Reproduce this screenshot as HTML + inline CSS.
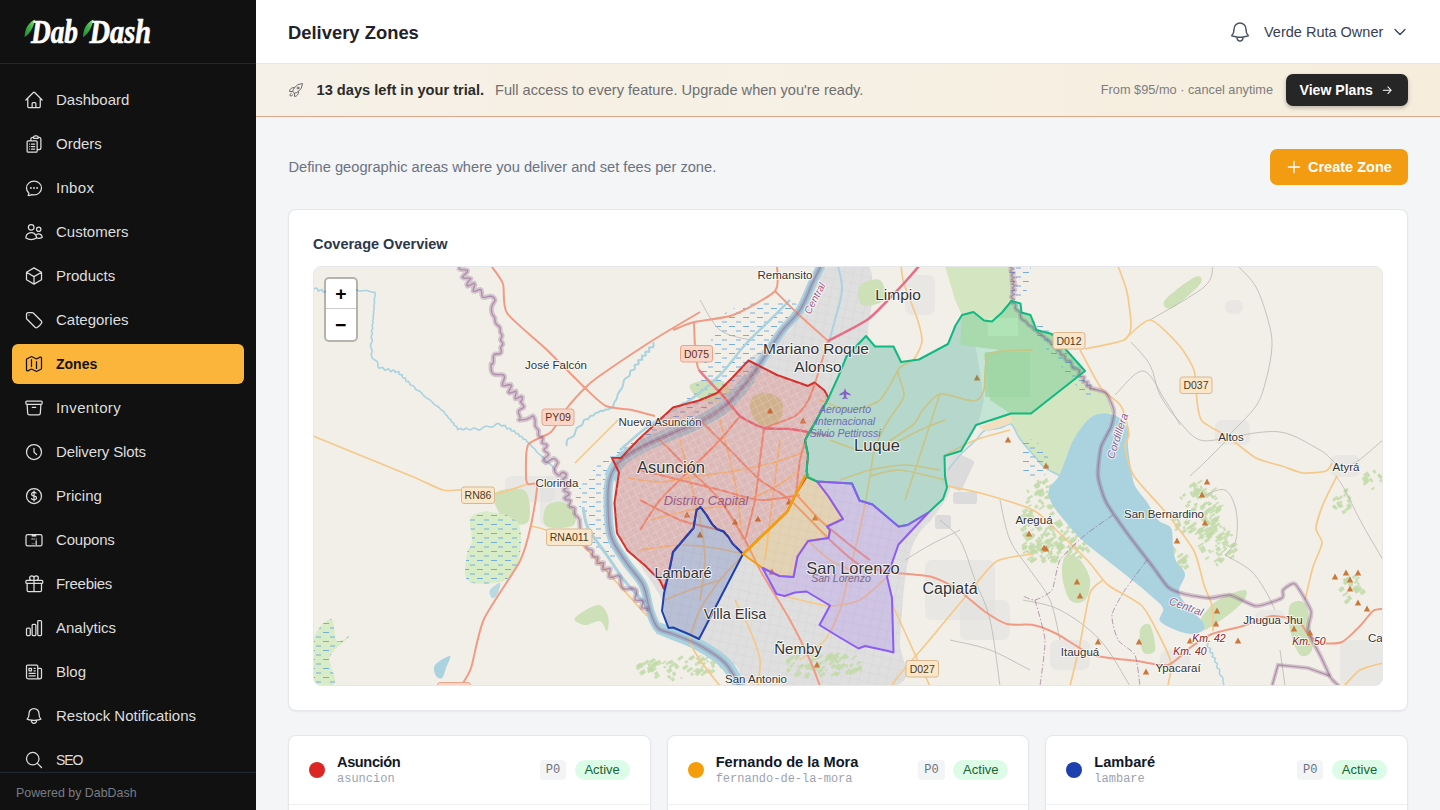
<!DOCTYPE html>
<html lang="en">
<head>
<meta charset="utf-8">
<title>Delivery Zones</title>
<style>
*{box-sizing:border-box;margin:0;padding:0}
html,body{width:1440px;height:810px;overflow:hidden}
body{font-family:"Liberation Sans",sans-serif;background:#f3f5f7;color:#1f2937;position:relative}
svg{display:block}
.ic{fill:none;stroke:currentColor;stroke-width:1.5;stroke-linecap:round;stroke-linejoin:round}
/* sidebar */
#side{position:absolute;left:0;top:0;width:256px;height:810px;background:#111111;color:#dcdcdc}
#logo{position:absolute;left:0;top:0;width:256px;height:64px;border-bottom:1px solid #1f2733}
#logo .t{position:absolute;left:31px;top:13px;font-family:"Liberation Serif",serif;font-style:italic;font-weight:bold;font-size:30px;line-height:36px;color:#fff;letter-spacing:-1px;white-space:nowrap}
#nav{position:absolute;left:12px;top:80px;width:232px}
#nav a{display:block;position:relative;height:40px;margin-bottom:4px;border-radius:6px;color:#dedede;text-decoration:none;font-size:15px;line-height:40px;padding-left:44px;white-space:nowrap}
#nav a svg{position:absolute;left:12px;top:10px;width:20px;height:20px}
#nav a.on{background:#fcb53b;color:#111;font-weight:bold;font-size:14px}
#foot{position:absolute;left:0;top:772px;width:256px;height:38px;border-top:1px solid #1f2733;color:#787c84;font-size:12.4px;line-height:40px;padding-left:16px}
/* header */
#head{position:absolute;left:256px;top:0;width:1184px;height:64px;background:#fff;border-bottom:1px solid #e5e7eb}
#head h1{position:absolute;left:32px;top:18.600px;font-size:18.4px;line-height:28px;font-weight:bold;color:#1f2328;white-space:nowrap}
#head .user{position:absolute;left:1008px;top:20px;font-size:14.5px;line-height:24px;color:#374151;white-space:nowrap}
#head .bell{position:absolute;left:972px;top:20px;width:24px;height:24px;color:#4b5563}
#head .chev{position:absolute;left:1136px;top:24px;width:16px;height:16px;color:#374151}
/* banner */
#ban{position:absolute;left:256px;top:64px;width:1184px;height:53px;background:linear-gradient(90deg,#f5f1e8 0%,#f7efe4 25%,#f6f0e3 60%,#f6eddc 100%);border-bottom:1px solid #e0a88a}
#ban .rk{position:absolute;left:32px;top:18px;width:16px;height:16px;color:#6b6b6b}
#ban .b1{position:absolute;left:60.5px;top:14px;font-size:14.65px;line-height:24px;font-weight:bold;color:#2b2b2b;white-space:nowrap}
#ban .b2{position:absolute;left:239px;top:14px;font-size:14.6px;line-height:24px;color:#6f6f6f;white-space:nowrap}
#ban .b3{position:absolute;right:167px;top:15px;font-size:12.75px;line-height:22px;color:#7d7d7d;white-space:nowrap}
#ban .btn{position:absolute;left:1030px;top:10px;width:122px;height:32px;border-radius:7px;background:#262626;color:#fff;font-weight:bold;font-size:14.1px;line-height:32px;padding-left:13.5px;box-shadow:0 2px 4px rgba(0,0,0,.25);white-space:nowrap}
#ban .btn svg{position:absolute;left:96px;top:11px;width:10.5px;height:10.5px;stroke-width:2.4}
/* main */
#desc{position:absolute;left:288.5px;top:155px;font-size:14.66px;line-height:24px;color:#6b7280;white-space:nowrap}
#create{position:absolute;left:1270px;top:149px;width:138px;height:36px;border-radius:7px;background:#f39c12;color:#fff;font-weight:bold;font-size:14.5px;line-height:36px;padding-left:38px;white-space:nowrap}
#create svg{position:absolute;left:15px;top:9px;width:18px;height:18px;stroke-width:1.8}
.card{position:absolute;background:#fff;border:1px solid #e5e7eb;border-radius:8px;box-shadow:0 1px 2px rgba(0,0,0,.06)}
#cov{left:288px;top:209px;width:1120px;height:502px}
#cov h2{position:absolute;left:24px;top:24px;font-size:14.5px;line-height:20px;font-weight:bold;color:#2d3748;white-space:nowrap}
#map{position:absolute;left:24px;top:56px;width:1070px;height:420px;border-radius:8px;overflow:hidden;border:1px solid #e5e7eb;background:#f2efe9}
.zc{top:735px;height:90px}
.zc .dot{position:absolute;left:20px;top:26px;width:16px;height:16px;border-radius:50%}
.zc .nm{position:absolute;left:48px;top:15px;font-size:14.6px;line-height:22px;font-weight:bold;color:#111827;white-space:nowrap}
.zc .sl{position:absolute;left:48px;top:35px;font-family:"Liberation Mono",monospace;font-size:12px;line-height:16px;color:#9ca3af;white-space:nowrap}
.zc .p0{position:absolute;right:83.5px;top:24px;width:26.5px;height:20px;border-radius:4px;background:#f3f4f6;color:#6b7280;font-family:"Liberation Mono",monospace;font-size:12px;line-height:20px;text-align:center}
.zc .ac{position:absolute;right:20px;top:24px;width:55px;height:20px;border-radius:10px;background:#dcfce7;color:#166534;font-size:13px;line-height:20px;text-align:center}
.zc .ln{position:absolute;left:0;right:0;top:68px;height:1px;background:#eef0f2}
</style>
</head>
<body>
<div id="side">
  <div id="logo"><svg width="256" height="64" viewBox="0 0 256 64" style="position:absolute;left:0;top:0">
<defs><linearGradient id="lf" x1="0" y1="1" x2="1" y2="0"><stop offset="0" stop-color="#1f8a33"/><stop offset=".55" stop-color="#3fb54a"/><stop offset="1" stop-color="#9be06a"/></linearGradient></defs>
<path d="M24.600 37.200C24.600 29.500 28 22.300 35 19.400C34 25.500 31 32.500 24.600 37.200Z" fill="url(#lf)"/>
<path d="M83 37.200C83 29.500 86.400 22.300 93.400 19.400C92.400 25.500 89.400 32.500 83 37.200Z" fill="url(#lf)"/>
<g font-family="'Liberation Serif',serif" font-weight="bold" font-style="italic" font-size="34" fill="#fff" stroke="#fff" stroke-width=".7" stroke-linejoin="round">
<text x="31" y="42.600" textLength="47" lengthAdjust="spacingAndGlyphs">Dab</text>
<text x="89.500" y="42.600" textLength="61.500" lengthAdjust="spacingAndGlyphs">Dash</text>
</g></svg></div>
  <div id="nav">
    <a><svg class="ic" viewBox="0 0 24 24"><path d="m2.25 12 8.954-8.955c.44-.439 1.152-.439 1.591 0L21.75 12M4.5 9.750v10.125c0 .621.504 1.125 1.125 1.125H9.750v-4.875c0-.621.504-1.125 1.125-1.125h2.250c.621 0 1.125.504 1.125 1.125V21h4.125c.621 0 1.125-.504 1.125-1.125V9.750M8.250 21h8.250"/></svg>Dashboard</a>
    <a><svg class="ic" viewBox="0 0 24 24"><path d="M9 12h3.750M9 15h3.750M9 18h3.750m3 .750H18a2.250 2.250 0 0 0 2.250-2.250V6.108c0-1.135-.845-2.098-1.976-2.192a48.424 48.424 0 0 0-1.123-.080m-5.801 0c-.065.210-.100.433-.100.664 0 .414.336.750.750.750h4.500a.750.750 0 0 0 .750-.750 2.250 2.250 0 0 0-.100-.664m-5.800 0A2.251 2.251 0 0 1 13.500 2.250H15c1.012 0 1.867.668 2.150 1.586m-5.800 0c-.376.023-.750.050-1.124.080C9.095 4.010 8.250 4.973 8.250 6.108V8.250m0 0H4.875c-.621 0-1.125.504-1.125 1.125v11.250c0 .621.504 1.125 1.125 1.125h9.750c.621 0 1.125-.504 1.125-1.125V9.375c0-.621-.504-1.125-1.125-1.125H8.250ZM6.750 12h.008v.008H6.750V12Zm0 3h.008v.008H6.750V15Zm0 3h.008v.008H6.750V18Z"/></svg>Orders</a>
    <a><svg class="ic" viewBox="0 0 24 24"><path d="M8.625 12a.375.375 0 1 1-.750 0 .375.375 0 0 1 .750 0Zm0 0H8.250m4.125 0a.375.375 0 1 1-.750 0 .375.375 0 0 1 .750 0Zm0 0H12m4.125 0a.375.375 0 1 1-.750 0 .375.375 0 0 1 .750 0Zm0 0h-.375M21 12c0 4.556-4.030 8.250-9 8.250a9.764 9.764 0 0 1-2.555-.337A5.972 5.972 0 0 1 5.410 20.970a5.969 5.969 0 0 1-.474-.065 4.480 4.480 0 0 0 .978-2.025c.090-.457-.133-.901-.467-1.226C3.930 16.178 3 14.189 3 12c0-4.556 4.030-8.250 9-8.250s9 3.694 9 8.250Z"/></svg><span style="letter-spacing:0.3px">Inbox</span></a>
    <a><svg class="ic" viewBox="0 0 24 24"><path d="M15 19.128a9.380 9.380 0 0 0 2.625.372 9.337 9.337 0 0 0 4.121-.952 4.125 4.125 0 0 0-7.533-2.493M15 19.128v-.003c0-1.113-.285-2.160-.786-3.070M15 19.128v.106A12.318 12.318 0 0 1 8.624 21c-2.331 0-4.512-.645-6.374-1.766l-.001-.109a6.375 6.375 0 0 1 11.964-3.070M12 6.375a3.375 3.375 0 1 1-6.750 0 3.375 3.375 0 0 1 6.750 0Zm8.250 2.250a2.625 2.625 0 1 1-5.250 0 2.625 2.625 0 0 1 5.250 0Z"/></svg>Customers</a>
    <a><svg class="ic" viewBox="0 0 24 24"><path d="m21 7.500-9-5.250L3 7.500m18 0-9 5.250m9-5.250v9l-9 5.250M3 7.500l9 5.250M3 7.500v9l9 5.250m0-9v9"/></svg>Products</a>
    <a><svg class="ic" viewBox="0 0 24 24"><path d="M9.568 3H5.250A2.250 2.250 0 0 0 3 5.250v4.318c0 .597.237 1.170.659 1.591l9.581 9.581c.699.699 1.780.872 2.607.330a18.095 18.095 0 0 0 5.223-5.223c.542-.827.369-1.908-.330-2.607L11.160 3.660A2.250 2.250 0 0 0 9.568 3Z"/><path d="M6 6h.008v.008H6V6Z"/></svg>Categories</a>
    <a class="on"><svg class="ic" viewBox="0 0 24 24"><path d="M9 6.750V15m6-6v8.250m.503 3.498 4.875-2.437c.381-.190.622-.580.622-1.006V4.820c0-.836-.880-1.380-1.628-1.006l-3.869 1.934c-.317.159-.690.159-1.006 0L9.503 3.252a1.125 1.125 0 0 0-1.006 0L3.622 5.689C3.240 5.880 3 6.270 3 6.695V19.180c0 .836.880 1.380 1.628 1.006l3.869-1.934c.317-.159.690-.159 1.006 0l4.994 2.497c.317.158.690.158 1.006 0Z"/></svg>Zones</a>
    <a><svg class="ic" viewBox="0 0 24 24"><path d="m20.250 7.500-.625 10.632a2.250 2.250 0 0 1-2.247 2.118H6.622a2.250 2.250 0 0 1-2.247-2.118L3.750 7.500M10 11.250h4M3.375 7.500h17.250c.621 0 1.125-.504 1.125-1.125v-1.500c0-.621-.504-1.125-1.125-1.125H3.375c-.621 0-1.125.504-1.125 1.125v1.500c0 .621.504 1.125 1.125 1.125Z"/></svg><span style="letter-spacing:0.38px">Inventory</span></a>
    <a><svg class="ic" viewBox="0 0 24 24"><path d="M12 7.500v4.700l3 2.800M21 12a9 9 0 1 1-18 0 9 9 0 0 1 18 0Z"/></svg><span style="letter-spacing:-0.13px">Delivery Slots</span></a>
    <a><svg class="ic" viewBox="0 0 24 24"><path d="M12 6v12m-3-2.818.879.659c1.171.879 3.070.879 4.242 0 1.172-.879 1.172-2.303 0-3.182C13.536 12.219 12.768 12 12 12c-.725 0-1.450-.220-2.003-.659-1.106-.879-1.106-2.303 0-3.182s2.900-.879 4.006 0l.415.330M21 12a9 9 0 1 1-18 0 9 9 0 0 1 18 0Z"/></svg>Pricing</a>
    <a><svg class="ic" viewBox="0 0 24 24"><rect x="2.400" y="5.400" width="19.200" height="13.600" rx="2"/><path d="M9.200 6.600h5.600" stroke-width="2.600" stroke-linecap="butt"/><path d="M9.400 10.800h.800M11.700 10.800h.800M14.500 10.800h.400" stroke-width="1.200"/><path d="M14.600 13v4.500"/><path d="M9.600 16.500h3" stroke-width="1" opacity=".5"/></svg><span style="letter-spacing:-0.2px">Coupons</span></a>
    <a><svg class="ic" viewBox="0 0 24 24"><path d="M21 11.250v8.250a1.500 1.500 0 0 1-1.500 1.500H5.250a1.500 1.500 0 0 1-1.500-1.500v-8.250M12 4.875A2.625 2.625 0 1 0 9.375 7.500H12m0-2.625V7.500m0-2.625A2.625 2.625 0 1 1 14.625 7.500H12m0 0V21m-8.625-9.750h18c.621 0 1.125-.504 1.125-1.125v-1.500c0-.621-.504-1.125-1.125-1.125h-18c-.621 0-1.125.504-1.125 1.125v1.500c0 .621.504 1.125 1.125 1.125Z"/></svg><span style="letter-spacing:-0.3px">Freebies</span></a>
    <a><svg class="ic" viewBox="0 0 24 24"><path d="M3 13.125C3 12.504 3.504 12 4.125 12h2.250c.621 0 1.125.504 1.125 1.125v6.750C7.500 20.496 6.996 21 6.375 21h-2.250A1.125 1.125 0 0 1 3 19.875v-6.750ZM9.750 8.625c0-.621.504-1.125 1.125-1.125h2.250c.621 0 1.125.504 1.125 1.125v11.250c0 .621-.504 1.125-1.125 1.125h-2.250a1.125 1.125 0 0 1-1.125-1.125V8.625ZM16.500 4.125c0-.621.504-1.125 1.125-1.125h2.250C20.496 3 21 3.504 21 4.125v15.750c0 .621-.504 1.125-1.125 1.125h-2.250a1.125 1.125 0 0 1-1.125-1.125V4.125Z"/></svg>Analytics</a>
    <a><svg class="ic" viewBox="0 0 24 24"><path d="M12 7.500h1.500m-1.500 3h1.500m-7.500 3h7.500m-7.500 3h7.500m3-9h3.375c.621 0 1.125.504 1.125 1.125V18a2.250 2.250 0 0 1-2.250 2.250M16.500 7.500V18a2.250 2.250 0 0 0 2.250 2.250M16.500 7.500V4.875c0-.621-.504-1.125-1.125-1.125H4.125C3.504 3.750 3 4.254 3 4.875V18a2.250 2.250 0 0 0 2.250 2.250h13.500M6 7.500h3v3H6v-3Z"/></svg>Blog</a>
    <a><svg class="ic" viewBox="0 0 24 24"><path d="M14.857 17.082a23.848 23.848 0 0 0 5.454-1.310A8.967 8.967 0 0 1 18 9.750V9A6 6 0 0 0 6 9v.750a8.967 8.967 0 0 1-2.312 6.022c1.733.640 3.560 1.085 5.455 1.310m5.714 0a24.255 24.255 0 0 1-5.714 0m5.714 0a3 3 0 1 1-5.714 0"/></svg>Restock Notifications</a>
    <a><svg class="ic" viewBox="0 0 24 24"><path d="m21 21-5.197-5.197m0 0A7.500 7.500 0 1 0 5.196 5.196a7.500 7.500 0 0 0 10.607 10.607Z"/></svg><span style="letter-spacing:-1.1px;font-size:14px">SEO</span></a>
  </div>
  <div id="foot">Powered by DabDash</div>
</div>

<div id="head">
  <h1>Delivery Zones</h1>
  <svg class="ic bell" viewBox="0 0 24 24"><path d="M14.857 17.082a23.848 23.848 0 0 0 5.454-1.310A8.967 8.967 0 0 1 18 9.750V9A6 6 0 0 0 6 9v.750a8.967 8.967 0 0 1-2.312 6.022c1.733.640 3.560 1.085 5.455 1.310m5.714 0a24.255 24.255 0 0 1-5.714 0m5.714 0a3 3 0 1 1-5.714 0"/></svg>
  <div class="user">Verde Ruta Owner</div>
  <svg class="ic chev" viewBox="0 0 24 24" style="stroke-width:2"><path d="m19.500 8.250-7.500 7.500-7.500-7.500"/></svg>
</div>

<div id="ban">
  <svg class="ic rk" viewBox="0 0 24 24"><path d="M15.590 14.370a6 6 0 0 1-5.840 7.380v-4.800m5.840-2.580a14.980 14.980 0 0 0 6.160-12.120A14.980 14.980 0 0 0 9.631 8.410m5.960 5.960a14.926 14.926 0 0 1-5.841 2.580m-.119-8.540a6 6 0 0 0-7.381 5.840h4.800m2.581-5.840a14.927 14.927 0 0 0-2.580 5.840m2.699 2.700c-.103.021-.207.041-.311.060a15.090 15.090 0 0 1-2.448-2.448 14.900 14.900 0 0 1 .060-.312m-2.240 2.390a4.493 4.493 0 0 0-1.757 4.306 4.493 4.493 0 0 0 4.306-1.758M16.500 9a1.500 1.500 0 1 1-3 0 1.500 1.500 0 0 1 3 0Z"/></svg>
  <div class="b1">13 days left in your trial.</div>
  <div class="b2">Full access to every feature. Upgrade when you're ready.</div>
  <div class="b3">From $95/mo · cancel anytime</div>
  <div class="btn">View Plans<svg class="ic" viewBox="0 0 24 24"><path d="M13.500 4.500 21 12m0 0-7.500 7.500M21 12H3"/></svg></div>
</div>

<div id="desc">Define geographic areas where you deliver and set fees per zone.</div>
<div id="create"><svg class="ic" viewBox="0 0 24 24"><path d="M12 4.500v15m7.500-7.500h-15"/></svg>Create Zone</div>

<div class="card" id="cov">
  <h2>Coverage Overview</h2>
  <div id="map">
<svg width="1070" height="420" viewBox="313 266 1070 420" style="position:absolute;left:-1px;top:-1px" font-family="'Liberation Sans',sans-serif">
<defs>
<pattern id="wet" width="14" height="9" patternUnits="userSpaceOnUse"><path d="M1 2.5h6M8 7h5" stroke="#6aa5dc" stroke-width=".9" fill="none"/></pattern>
<pattern id="grid" width="7" height="7" patternUnits="userSpaceOnUse" patternTransform="rotate(-28)"><path d="M0 .5h7M.5 0v7" stroke="#fff" stroke-opacity=".5" stroke-width=".6" fill="none"/></pattern>
<pattern id="grid2" width="9" height="9" patternUnits="userSpaceOnUse" patternTransform="rotate(12)"><path d="M0 .5h9M.5 0v9" stroke="#c9c7c4" stroke-opacity=".45" stroke-width=".5" fill="none"/></pattern>
</defs>
<rect x="313" y="266" width="1070" height="420" fill="#f2efe9"/>
<path d="M640 440C648.7 431.7 661.2 417 672 410C682.8 403 695.3 403 705 398C714.7 393 722.8 386.3 730 380C737.2 373.7 738 368.3 748 360C758 351.7 781.3 340 790 330C798.7 320 795.8 309.2 800 300C804.2 290.8 809.2 280.7 815 275C820.8 269.3 826.2 267.5 835 266C843.8 264.5 861.8 260.3 868 266C874.2 271.7 872 288.3 872 300C872 311.7 866.7 327.7 868 336C869.3 344.3 873.8 345.2 880 350C886.2 354.8 895.8 359.2 905 365C914.2 370.8 926.7 375.8 935 385C943.3 394.2 951.2 408.3 955 420C958.8 431.7 958.8 443.3 958 455C957.2 466.7 953.8 480 950 490C946.2 500 940.8 506.7 935 515C929.2 523.3 920 529.2 915 540C910 550.8 907.5 563.3 905 580C902.5 596.7 901.7 622.3 900 640C898.3 657.7 918.3 678.3 895 686C871.7 693.7 786.7 689.5 760 686C733.3 682.5 745 671.8 735 665C725 658.2 711.2 651.2 700 645C688.8 638.8 674.3 635.5 668 628C661.7 620.5 666.7 610.5 662 600C657.3 589.5 647.3 575.8 640 565C632.7 554.2 622.3 545.8 618 535C613.7 524.2 613.7 512.5 614 500C614.3 487.5 615.7 470 620 460C624.3 450 631.3 448.3 640 440Z" fill="#e0dfdf"/>
<path d="M640 440C648.7 431.7 661.2 417 672 410C682.8 403 695.3 403 705 398C714.7 393 722.8 386.3 730 380C737.2 373.7 738 368.3 748 360C758 351.7 781.3 340 790 330C798.7 320 795.8 309.2 800 300C804.2 290.8 809.2 280.7 815 275C820.8 269.3 826.2 267.5 835 266C843.8 264.5 861.8 260.3 868 266C874.2 271.7 872 288.3 872 300C872 311.7 866.7 327.7 868 336C869.3 344.3 873.8 345.2 880 350C886.2 354.8 895.8 359.2 905 365C914.2 370.8 926.7 375.8 935 385C943.3 394.2 951.2 408.3 955 420C958.8 431.7 958.8 443.3 958 455C957.2 466.7 953.8 480 950 490C946.2 500 940.8 506.7 935 515C929.2 523.3 920 529.2 915 540C910 550.8 907.5 563.3 905 580C902.5 596.7 901.7 622.3 900 640C898.3 657.7 918.3 678.3 895 686C871.7 693.7 786.7 689.5 760 686C733.3 682.5 745 671.8 735 665C725 658.2 711.2 651.2 700 645C688.8 638.8 674.3 635.5 668 628C661.7 620.5 666.7 610.5 662 600C657.3 589.5 647.3 575.8 640 565C632.7 554.2 622.3 545.8 618 535C613.7 524.2 613.7 512.5 614 500C614.3 487.5 615.7 470 620 460C624.3 450 631.3 448.3 640 440Z" fill="url(#grid2)"/>
<rect x="925" y="560" width="70" height="60" rx="7" fill="#e0dfdf" opacity=".5"/>
<rect x="960" y="600" width="50" height="40" rx="7" fill="#e0dfdf" opacity=".5"/>
<rect x="1050" y="640" width="40" height="30" rx="7" fill="#e0dfdf" opacity=".5"/>
<rect x="1160" y="650" width="30" height="22" rx="7" fill="#e0dfdf" opacity=".5"/>
<rect x="1215" y="420" width="35" height="25" rx="7" fill="#e0dfdf" opacity=".5"/>
<rect x="1330" y="455" width="30" height="22" rx="7" fill="#e0dfdf" opacity=".5"/>
<rect x="1340" y="640" width="43" height="46" rx="7" fill="#e0dfdf" opacity=".5"/>
<rect x="1255" y="610" width="30" height="14" rx="7" fill="#e0dfdf" opacity=".5"/>
<rect x="1085" y="498" width="24" height="14" rx="7" fill="#e0dfdf" opacity=".5"/>
<rect x="505" y="476" width="50" height="26" rx="7" fill="#e0dfdf" opacity=".5"/>
<rect x="540" y="476" width="30" height="50" rx="7" fill="#e0dfdf" opacity=".5"/>
<rect x="1225" y="300" width="18" height="14" rx="7" fill="#e0dfdf" opacity=".5"/>
<rect x="905" y="275" width="30" height="40" rx="7" fill="#e0dfdf" opacity=".5"/>
<path d="M945 266 L1011 266 L1014 285 L1012 300 L1023 320 L1049 341 L1077 370 L1090 388 L1106 393 L1113 413 L1093 416 L1075 437 L1066 458 L1060 476 L1044 467 L1024 444 L1011 424 L990 421 L976 425 L1011 414 L1031 413 L1085 371 L1052 334 L1036 330 L1030 315 L1021 312 L1011 301 L1002 313 L992 322 L984 320 L974 312 L962 315 L955 300Z" fill="#d4e5c1"/>
<path d="M806 471 L808 455 L805 440 L817 419 L828.5 398 L839 375 L846.5 356.5 L866 336 L875 346.5 L893.5 346.5 L901 362 L919 359.5 L948 344 L955.5 325.5 L962 315 L972 330 L978 360 L984 400 L978 425 L961 451 L944.5 456 L945 476 L947 487.5 L943 499 L928.5 512.5 L907.5 525 L898.5 526.5 L872.5 504.5 L859.5 500.5 L852 483.5 L817 481.5Z" fill="#e0dfdf"/>
<rect x="955" y="452" width="22" height="34" rx="3" fill="#dcdbdb" transform="rotate(25 955 452)"/>
<rect x="953" y="492" width="24" height="12" rx="3" fill="#dcdbdb" transform="rotate(0 953 492)"/>
<rect x="935" y="515" width="16" height="14" rx="3" fill="#dcdbdb" transform="rotate(0 935 515)"/>
<path d="M948 470C949.6 468 956.3 459 960 455C963.7 451 972.8 443.2 976 440C979.2 436.8 980.8 432.6 984 431C987.2 429.4 996.4 428.9 1000 428C1003.6 427.1 1008.6 422.9 1011 424C1013.4 425.1 1016.3 433.3 1018 436C1019.7 438.7 1021.6 441.1 1024 444C1026.4 446.9 1033.3 454.9 1036 458C1038.7 461.1 1040.8 464.6 1044 467C1047.2 469.4 1057.9 474.8 1060 476" fill="none" stroke="#aad3df" stroke-width="1.6"/>
<path d="M962 315 L974 312 L984 320 L992 322 L1002 313 L1011 301 L1021 312 L1030 315 L1036 330 L1052 334 L1085 371 L1031 413 L1011 414 L990 400 L984 354 L1000 350 L960 345Z" fill="#cfe3b8"/>
<rect x="985" y="352" width="45" height="45" fill="#c3dcae" opacity=".8"/>
<rect x="988" y="318" width="30" height="18" fill="#d9efc4"/>
<path d="M978 427 L1011 415 L1012 423 L1000 427 L986 431Z" fill="#f1dfc0"/>
<path d="M494 494C497.3 489.2 519.3 486.3 525 491C530.7 495.7 531.3 517.2 528 522C524.7 526.8 510.7 524.7 505 520C499.3 515.3 490.7 498.8 494 494Z" fill="#cde0b8"/>
<path d="M546 507C548.7 503 557.2 501.2 562 502C566.8 502.8 573.3 508 575 512C576.7 516 576.8 523.7 572 526C567.2 528.3 550.3 529.2 546 526C541.7 522.8 543.3 511 546 507Z" fill="#cde0b8"/>
<path d="M575 618C577.2 614.7 592.5 605.3 598 605C603.5 604.7 606.5 611.7 608 616C609.5 620.3 608.3 630.2 607 631C605.7 631.8 603.7 622 600 621C596.3 620 589.2 625.5 585 625C580.8 624.5 572.8 621.3 575 618Z" fill="#cde0b8"/>
<path d="M1165 300C1168.8 294.8 1189.2 279.7 1195 277C1200.8 274.3 1203.8 278.8 1200 284C1196.2 289.2 1177.8 305.3 1172 308C1166.2 310.7 1161.2 305.2 1165 300Z" fill="#cde0b8"/>
<path d="M860 286C863 281.8 876 277.7 880 280C884 282.3 887 295.8 884 300C881 304.2 866 307.3 862 305C858 302.7 857 290.2 860 286Z" fill="#cde0b8"/>
<path d="M1066 555C1069 552.5 1076 555.8 1080 560C1084 564.2 1089.2 573.3 1090 580C1090.8 586.7 1088.3 596.7 1085 600C1081.7 603.3 1073.8 604.2 1070 600C1066.2 595.8 1062.7 582.5 1062 575C1061.3 567.5 1063 557.5 1066 555Z" fill="#cde0b8"/>
<path d="M1290 605C1292.5 600.5 1301.7 599.7 1305 603C1308.3 606.3 1308.8 617.2 1310 625C1311.2 632.8 1313.7 645 1312 650C1310.3 655 1303.7 658.3 1300 655C1296.3 651.7 1291.7 638.3 1290 630C1288.3 621.7 1287.5 609.5 1290 605Z" fill="#cde0b8"/>
<path d="M1218 600C1225.5 595 1241.3 589.2 1245 590C1248.7 590.8 1246.7 598.3 1240 605C1233.3 611.7 1211.7 627.5 1205 630C1198.3 632.5 1197.8 625 1200 620C1202.2 615 1210.5 605 1218 600Z" fill="#cde0b8"/>
<path d="M1140 630C1141.2 625.5 1147.5 621.7 1150 625C1152.5 628.3 1156.2 645.5 1155 650C1153.8 654.5 1145.5 655.3 1143 652C1140.5 648.7 1138.8 634.5 1140 630Z" fill="#cde0b8"/>
<path d="M690 385C692.5 381.3 713.3 378.3 720 380C726.7 381.7 732.5 391.3 730 395C727.5 398.7 711.7 403.7 705 402C698.3 400.3 687.5 388.7 690 385Z" fill="#cde0b8"/>
<path d="M752 398C754.7 394.2 763 392.3 768 393C773 393.7 780 397.5 782 402C784 406.5 783 416 780 420C777 424 768.7 426.7 764 426C759.3 425.3 754 420.7 752 416C750 411.3 749.3 401.8 752 398Z" fill="#cfd3a8"/>
<rect x="1036.2" y="543.9" width="5.3" height="1.7" fill="#c2dba9" opacity=".85" transform="rotate(-35 1036.2 543.9)"/>
<rect x="1027" y="524.6" width="2.3" height="3" fill="#c2dba9" opacity=".85" transform="rotate(-35 1027 524.6)"/>
<rect x="1054.1" y="536.1" width="2.3" height="1.8" fill="#c2dba9" opacity=".85" transform="rotate(-35 1054.1 536.1)"/>
<rect x="1022.2" y="546.6" width="2.6" height="2.2" fill="#c2dba9" opacity=".85" transform="rotate(-35 1022.2 546.6)"/>
<rect x="1025.1" y="502" width="4.9" height="2.7" fill="#c2dba9" opacity=".85" transform="rotate(-35 1025.1 502)"/>
<rect x="1044.7" y="528.7" width="6.3" height="2.4" fill="#c2dba9" opacity=".85" transform="rotate(-35 1044.7 528.7)"/>
<rect x="1044.7" y="540.8" width="3.5" height="3.9" fill="#c2dba9" opacity=".85" transform="rotate(-35 1044.7 540.8)"/>
<rect x="1047.1" y="557.7" width="5.2" height="2.6" fill="#c2dba9" opacity=".85" transform="rotate(-35 1047.1 557.7)"/>
<rect x="1034.7" y="527" width="2.3" height="2.1" fill="#c2dba9" opacity=".85" transform="rotate(-35 1034.7 527)"/>
<rect x="1033.9" y="506.3" width="3.6" height="3.3" fill="#c2dba9" opacity=".85" transform="rotate(-35 1033.9 506.3)"/>
<rect x="1028.5" y="536.3" width="6" height="3.6" fill="#c2dba9" opacity=".85" transform="rotate(-35 1028.5 536.3)"/>
<rect x="1040.6" y="560.3" width="4.6" height="4.1" fill="#c2dba9" opacity=".85" transform="rotate(-35 1040.6 560.3)"/>
<rect x="1038.5" y="508.7" width="6.9" height="1.9" fill="#c2dba9" opacity=".85" transform="rotate(-35 1038.5 508.7)"/>
<rect x="1023.3" y="547.1" width="2.8" height="3" fill="#c2dba9" opacity=".85" transform="rotate(-35 1023.3 547.1)"/>
<rect x="1057.4" y="538" width="5.8" height="3.2" fill="#c2dba9" opacity=".85" transform="rotate(-35 1057.4 538)"/>
<rect x="1048.7" y="514.2" width="5.5" height="3.3" fill="#c2dba9" opacity=".85" transform="rotate(-35 1048.7 514.2)"/>
<rect x="1027" y="517" width="6.2" height="4.3" fill="#c2dba9" opacity=".85" transform="rotate(-35 1027 517)"/>
<rect x="1022.3" y="535.3" width="2.3" height="3.6" fill="#c2dba9" opacity=".85" transform="rotate(-35 1022.3 535.3)"/>
<rect x="1026.8" y="498.2" width="6.1" height="2.4" fill="#c2dba9" opacity=".85" transform="rotate(-35 1026.8 498.2)"/>
<rect x="1026.4" y="551.5" width="2.1" height="2.9" fill="#c2dba9" opacity=".85" transform="rotate(-35 1026.4 551.5)"/>
<rect x="1043.7" y="541.9" width="2.3" height="3.8" fill="#c2dba9" opacity=".85" transform="rotate(-35 1043.7 541.9)"/>
<rect x="1047.5" y="544.5" width="4" height="4.1" fill="#c2dba9" opacity=".85" transform="rotate(-35 1047.5 544.5)"/>
<rect x="1052.9" y="543" width="4.7" height="4.2" fill="#c2dba9" opacity=".85" transform="rotate(-35 1052.9 543)"/>
<rect x="1048.6" y="496.3" width="3.4" height="2.7" fill="#c2dba9" opacity=".85" transform="rotate(-35 1048.6 496.3)"/>
<rect x="1026.9" y="559.2" width="6.8" height="2" fill="#c2dba9" opacity=".85" transform="rotate(-35 1026.9 559.2)"/>
<rect x="1044.7" y="547.2" width="3.2" height="3" fill="#c2dba9" opacity=".85" transform="rotate(-35 1044.7 547.2)"/>
<rect x="1030.4" y="519.1" width="2" height="2.8" fill="#c2dba9" opacity=".85" transform="rotate(-35 1030.4 519.1)"/>
<rect x="1028.7" y="552" width="6.8" height="3.6" fill="#c2dba9" opacity=".85" transform="rotate(-35 1028.7 552)"/>
<rect x="1022.8" y="526.9" width="5.4" height="1.7" fill="#c2dba9" opacity=".85" transform="rotate(-35 1022.8 526.9)"/>
<rect x="1055.7" y="509.2" width="6.4" height="3.9" fill="#c2dba9" opacity=".85" transform="rotate(-35 1055.7 509.2)"/>
<rect x="1029.2" y="545.8" width="2.5" height="3.4" fill="#c2dba9" opacity=".85" transform="rotate(-35 1029.2 545.8)"/>
<rect x="1045.3" y="534" width="3" height="2" fill="#c2dba9" opacity=".85" transform="rotate(-35 1045.3 534)"/>
<rect x="1037.3" y="537.7" width="2" height="2" fill="#c2dba9" opacity=".85" transform="rotate(-35 1037.3 537.7)"/>
<rect x="1050.7" y="544.4" width="2.1" height="4.1" fill="#c2dba9" opacity=".85" transform="rotate(-35 1050.7 544.4)"/>
<rect x="1033.6" y="519.9" width="3.3" height="2.5" fill="#c2dba9" opacity=".85" transform="rotate(-35 1033.6 519.9)"/>
<rect x="1034.9" y="540.6" width="6.2" height="4.5" fill="#c2dba9" opacity=".85" transform="rotate(-35 1034.9 540.6)"/>
<rect x="1025" y="535.9" width="2.4" height="1.8" fill="#c2dba9" opacity=".85" transform="rotate(-35 1025 535.9)"/>
<rect x="1033.8" y="547.2" width="6.1" height="2" fill="#c2dba9" opacity=".85" transform="rotate(-35 1033.8 547.2)"/>
<rect x="1061.2" y="535.6" width="4.6" height="1.9" fill="#c2dba9" opacity=".85" transform="rotate(-35 1061.2 535.6)"/>
<rect x="1036.5" y="528.2" width="4.6" height="4.4" fill="#c2dba9" opacity=".85" transform="rotate(-35 1036.5 528.2)"/>
<rect x="1052" y="504.7" width="3.3" height="2.6" fill="#c2dba9" opacity=".85" transform="rotate(-35 1052 504.7)"/>
<rect x="1049.6" y="560.5" width="4.7" height="3.8" fill="#c2dba9" opacity=".85" transform="rotate(-35 1049.6 560.5)"/>
<rect x="1035" y="546.6" width="6.1" height="4.5" fill="#c2dba9" opacity=".85" transform="rotate(-35 1035 546.6)"/>
<rect x="1051.9" y="501.3" width="6.1" height="3.7" fill="#c2dba9" opacity=".85" transform="rotate(-35 1051.9 501.3)"/>
<rect x="1042.3" y="558.5" width="3.8" height="1.6" fill="#c2dba9" opacity=".85" transform="rotate(-35 1042.3 558.5)"/>
<rect x="1051.5" y="533.7" width="3.3" height="3.6" fill="#c2dba9" opacity=".85" transform="rotate(-35 1051.5 533.7)"/>
<rect x="1054.2" y="522.8" width="6.7" height="4.5" fill="#c2dba9" opacity=".85" transform="rotate(-35 1054.2 522.8)"/>
<rect x="1052.8" y="523.3" width="3.1" height="2.2" fill="#c2dba9" opacity=".85" transform="rotate(-35 1052.8 523.3)"/>
<rect x="1043.3" y="547.1" width="5.1" height="4.2" fill="#c2dba9" opacity=".85" transform="rotate(-35 1043.3 547.1)"/>
<rect x="1048.2" y="506.7" width="5.3" height="3.9" fill="#c2dba9" opacity=".85" transform="rotate(-35 1048.2 506.7)"/>
<rect x="1055.4" y="546.5" width="6.5" height="3.8" fill="#c2dba9" opacity=".85" transform="rotate(-35 1055.4 546.5)"/>
<rect x="1040" y="502.3" width="2.9" height="3.9" fill="#c2dba9" opacity=".85" transform="rotate(-35 1040 502.3)"/>
<rect x="1030.2" y="561.1" width="6.9" height="2.7" fill="#c2dba9" opacity=".85" transform="rotate(-35 1030.2 561.1)"/>
<rect x="1022.6" y="552.6" width="5.6" height="2" fill="#c2dba9" opacity=".85" transform="rotate(-35 1022.6 552.6)"/>
<rect x="1046" y="541.1" width="6.5" height="3.9" fill="#c2dba9" opacity=".85" transform="rotate(-35 1046 541.1)"/>
<rect x="1052.1" y="558.9" width="6.9" height="3.5" fill="#c2dba9" opacity=".85" transform="rotate(-35 1052.1 558.9)"/>
<rect x="1030.4" y="553.9" width="2.7" height="1.5" fill="#c2dba9" opacity=".85" transform="rotate(-35 1030.4 553.9)"/>
<rect x="1057.4" y="524.1" width="4.6" height="4.3" fill="#c2dba9" opacity=".85" transform="rotate(-35 1057.4 524.1)"/>
<rect x="1021.2" y="545.1" width="6.1" height="2.1" fill="#c2dba9" opacity=".85" transform="rotate(-35 1021.2 545.1)"/>
<rect x="1039.9" y="551.6" width="3.2" height="3.3" fill="#c2dba9" opacity=".85" transform="rotate(-35 1039.9 551.6)"/>
<rect x="1039.2" y="555.8" width="2.7" height="4.2" fill="#c2dba9" opacity=".85" transform="rotate(-35 1039.2 555.8)"/>
<rect x="1031" y="551.5" width="4.9" height="4.2" fill="#c2dba9" opacity=".85" transform="rotate(-35 1031 551.5)"/>
<rect x="1021.5" y="548.3" width="4.5" height="3.1" fill="#c2dba9" opacity=".85" transform="rotate(-35 1021.5 548.3)"/>
<rect x="1037" y="529.2" width="4.2" height="2" fill="#c2dba9" opacity=".85" transform="rotate(-35 1037 529.2)"/>
<rect x="1059.7" y="530.9" width="2.9" height="2.9" fill="#c2dba9" opacity=".85" transform="rotate(-35 1059.7 530.9)"/>
<rect x="1037.5" y="500.5" width="3.6" height="3.1" fill="#c2dba9" opacity=".85" transform="rotate(-35 1037.5 500.5)"/>
<rect x="1021.7" y="517.9" width="2.5" height="3.2" fill="#c2dba9" opacity=".85" transform="rotate(-35 1021.7 517.9)"/>
<rect x="1040.1" y="551" width="5.9" height="3" fill="#c2dba9" opacity=".85" transform="rotate(-35 1040.1 551)"/>
<rect x="1022.2" y="516.8" width="6.6" height="2.8" fill="#c2dba9" opacity=".85" transform="rotate(-35 1022.2 516.8)"/>
<rect x="1028.1" y="511.5" width="4.6" height="3.6" fill="#c2dba9" opacity=".85" transform="rotate(-35 1028.1 511.5)"/>
<rect x="1024.6" y="538.6" width="4.4" height="4.3" fill="#c2dba9" opacity=".85" transform="rotate(-35 1024.6 538.6)"/>
<rect x="1033.5" y="494.4" width="6.7" height="2.3" fill="#c2dba9" opacity=".85" transform="rotate(-35 1033.5 494.4)"/>
<rect x="1020.1" y="515.8" width="6.2" height="1.9" fill="#c2dba9" opacity=".85" transform="rotate(-35 1020.1 515.8)"/>
<rect x="1050.6" y="548.4" width="2.4" height="2.2" fill="#c2dba9" opacity=".85" transform="rotate(-35 1050.6 548.4)"/>
<rect x="1056.1" y="544.5" width="5.9" height="4.2" fill="#c2dba9" opacity=".85" transform="rotate(-35 1056.1 544.5)"/>
<rect x="1050.5" y="557.9" width="5.3" height="1.9" fill="#c2dba9" opacity=".85" transform="rotate(-35 1050.5 557.9)"/>
<rect x="1056" y="503.6" width="3.1" height="4.4" fill="#c2dba9" opacity=".85" transform="rotate(-35 1056 503.6)"/>
<rect x="1027.7" y="546.7" width="6.9" height="4" fill="#c2dba9" opacity=".85" transform="rotate(-35 1027.7 546.7)"/>
<rect x="1047.6" y="552.3" width="4.6" height="2.5" fill="#c2dba9" opacity=".85" transform="rotate(-35 1047.6 552.3)"/>
<rect x="1044.2" y="551.3" width="5.6" height="1.6" fill="#c2dba9" opacity=".85" transform="rotate(-35 1044.2 551.3)"/>
<rect x="1026.2" y="521.2" width="2.1" height="2.5" fill="#c2dba9" opacity=".85" transform="rotate(-35 1026.2 521.2)"/>
<rect x="1028.8" y="509.9" width="2.3" height="4.5" fill="#c2dba9" opacity=".85" transform="rotate(-35 1028.8 509.9)"/>
<rect x="1045.2" y="491.7" width="2.5" height="2.3" fill="#c2dba9" opacity=".85" transform="rotate(-35 1045.2 491.7)"/>
<rect x="1058.8" y="538.7" width="3.4" height="1.9" fill="#c2dba9" opacity=".85" transform="rotate(-35 1058.8 538.7)"/>
<rect x="1021.5" y="547.9" width="6.1" height="2.3" fill="#c2dba9" opacity=".85" transform="rotate(-35 1021.5 547.9)"/>
<rect x="1052.5" y="560.9" width="4.9" height="3.6" fill="#c2dba9" opacity=".85" transform="rotate(-35 1052.5 560.9)"/>
<rect x="1044.5" y="535.1" width="5.4" height="2.8" fill="#c2dba9" opacity=".85" transform="rotate(-35 1044.5 535.1)"/>
<rect x="1059.1" y="547" width="5.2" height="3.9" fill="#c2dba9" opacity=".85" transform="rotate(-35 1059.1 547)"/>
<rect x="1057.6" y="548.6" width="2.3" height="4.1" fill="#c2dba9" opacity=".85" transform="rotate(-35 1057.6 548.6)"/>
<rect x="1027.7" y="536.7" width="4.8" height="4.3" fill="#c2dba9" opacity=".85" transform="rotate(-35 1027.7 536.7)"/>
<rect x="1039.1" y="544.3" width="4.6" height="2.2" fill="#c2dba9" opacity=".85" transform="rotate(-35 1039.1 544.3)"/>
<rect x="1046.8" y="540.2" width="2.3" height="2.1" fill="#c2dba9" opacity=".85" transform="rotate(-35 1046.8 540.2)"/>
<rect x="1035.4" y="550.4" width="5.8" height="2.4" fill="#c2dba9" opacity=".85" transform="rotate(-35 1035.4 550.4)"/>
<rect x="1030.7" y="530" width="3.7" height="1.6" fill="#c2dba9" opacity=".85" transform="rotate(-35 1030.7 530)"/>
<rect x="1040" y="535" width="5.7" height="3.2" fill="#c2dba9" opacity=".85" transform="rotate(-35 1040 535)"/>
<rect x="1045.6" y="555.6" width="6.7" height="1.8" fill="#c2dba9" opacity=".85" transform="rotate(-35 1045.6 555.6)"/>
<rect x="1046.1" y="506.1" width="4.5" height="4" fill="#c2dba9" opacity=".85" transform="rotate(-35 1046.1 506.1)"/>
<rect x="1027.7" y="547.7" width="5.4" height="4.4" fill="#c2dba9" opacity=".85" transform="rotate(-35 1027.7 547.7)"/>
<rect x="1029" y="560.5" width="5.5" height="3.4" fill="#c2dba9" opacity=".85" transform="rotate(-35 1029 560.5)"/>
<rect x="1029.3" y="543.3" width="2.3" height="1.9" fill="#c2dba9" opacity=".85" transform="rotate(-35 1029.3 543.3)"/>
<rect x="1057.1" y="544.8" width="3.3" height="2" fill="#c2dba9" opacity=".85" transform="rotate(-35 1057.1 544.8)"/>
<rect x="1057.4" y="548.6" width="6.4" height="3.5" fill="#c2dba9" opacity=".85" transform="rotate(-35 1057.4 548.6)"/>
<rect x="1037.8" y="549.3" width="3.5" height="2.9" fill="#c2dba9" opacity=".85" transform="rotate(-35 1037.8 549.3)"/>
<rect x="1048.1" y="552.3" width="3.3" height="4.4" fill="#c2dba9" opacity=".85" transform="rotate(-35 1048.1 552.3)"/>
<rect x="1056" y="524.9" width="3.2" height="4.4" fill="#c2dba9" opacity=".85" transform="rotate(-35 1056 524.9)"/>
<rect x="1035.2" y="552.2" width="2" height="2.6" fill="#c2dba9" opacity=".85" transform="rotate(-35 1035.2 552.2)"/>
<rect x="1024.6" y="534.5" width="3" height="3" fill="#c2dba9" opacity=".85" transform="rotate(-35 1024.6 534.5)"/>
<rect x="1051.3" y="530.6" width="2.4" height="2.7" fill="#c2dba9" opacity=".85" transform="rotate(-35 1051.3 530.6)"/>
<rect x="1043.2" y="531.6" width="3.5" height="2.2" fill="#c2dba9" opacity=".85" transform="rotate(-35 1043.2 531.6)"/>
<rect x="1026.3" y="515.1" width="5.8" height="3.5" fill="#c2dba9" opacity=".85" transform="rotate(-35 1026.3 515.1)"/>
<rect x="1035.6" y="493.3" width="3.9" height="2.5" fill="#c2dba9" opacity=".85" transform="rotate(-35 1035.6 493.3)"/>
<rect x="1048.5" y="528.5" width="5.6" height="3.4" fill="#c2dba9" opacity=".85" transform="rotate(-35 1048.5 528.5)"/>
<rect x="1059.4" y="539.9" width="6.5" height="3.4" fill="#c2dba9" opacity=".85" transform="rotate(-35 1059.4 539.9)"/>
<rect x="1038" y="494.1" width="2.7" height="3.1" fill="#c2dba9" opacity=".85" transform="rotate(-35 1038 494.1)"/>
<rect x="1019.9" y="529" width="6" height="4" fill="#c2dba9" opacity=".85" transform="rotate(-35 1019.9 529)"/>
<rect x="1022" y="511" width="5.4" height="3.6" fill="#c2dba9" opacity=".85" transform="rotate(-35 1022 511)"/>
<rect x="1040.5" y="537" width="2.7" height="2.6" fill="#c2dba9" opacity=".85" transform="rotate(-35 1040.5 537)"/>
<rect x="1055.9" y="552.4" width="4.8" height="3.4" fill="#c2dba9" opacity=".85" transform="rotate(-35 1055.9 552.4)"/>
<rect x="1027.3" y="506.5" width="4.4" height="1.5" fill="#c2dba9" opacity=".85" transform="rotate(-35 1027.3 506.5)"/>
<rect x="1045.6" y="496.9" width="4.5" height="3.1" fill="#c2dba9" opacity=".85" transform="rotate(-35 1045.6 496.9)"/>
<rect x="1036.9" y="521.3" width="5.7" height="2.3" fill="#c2dba9" opacity=".85" transform="rotate(-35 1036.9 521.3)"/>
<rect x="1050.1" y="539.3" width="5.6" height="2.1" fill="#c2dba9" opacity=".85" transform="rotate(-35 1050.1 539.3)"/>
<rect x="1038.6" y="490.6" width="4.5" height="2.6" fill="#c2dba9" opacity=".85" transform="rotate(-35 1038.6 490.6)"/>
<rect x="1022" y="534.3" width="5.8" height="3.4" fill="#c2dba9" opacity=".85" transform="rotate(-35 1022 534.3)"/>
<rect x="1036.2" y="521.3" width="2.7" height="2.3" fill="#c2dba9" opacity=".85" transform="rotate(-35 1036.2 521.3)"/>
<rect x="1074.7" y="530.1" width="4.8" height="1.5" fill="#c2dba9" opacity=".85" transform="rotate(-35 1074.7 530.1)"/>
<rect x="1081.7" y="543.5" width="5.4" height="3.6" fill="#c2dba9" opacity=".85" transform="rotate(-35 1081.7 543.5)"/>
<rect x="1071.6" y="531.3" width="4.6" height="2.9" fill="#c2dba9" opacity=".85" transform="rotate(-35 1071.6 531.3)"/>
<rect x="1070.3" y="541.3" width="6.5" height="2.1" fill="#c2dba9" opacity=".85" transform="rotate(-35 1070.3 541.3)"/>
<rect x="1088.4" y="537.6" width="2.1" height="2.9" fill="#c2dba9" opacity=".85" transform="rotate(-35 1088.4 537.6)"/>
<rect x="1080.9" y="524" width="4.2" height="2.3" fill="#c2dba9" opacity=".85" transform="rotate(-35 1080.9 524)"/>
<rect x="1078.4" y="556.9" width="3.1" height="3.2" fill="#c2dba9" opacity=".85" transform="rotate(-35 1078.4 556.9)"/>
<rect x="1081.4" y="550.1" width="6.8" height="1.9" fill="#c2dba9" opacity=".85" transform="rotate(-35 1081.4 550.1)"/>
<rect x="1079.3" y="528.4" width="6.4" height="3.6" fill="#c2dba9" opacity=".85" transform="rotate(-35 1079.3 528.4)"/>
<rect x="1076.5" y="556.9" width="4.4" height="1.6" fill="#c2dba9" opacity=".85" transform="rotate(-35 1076.5 556.9)"/>
<rect x="1084.8" y="540.3" width="4.3" height="2.4" fill="#c2dba9" opacity=".85" transform="rotate(-35 1084.8 540.3)"/>
<rect x="1080.2" y="548.2" width="3.6" height="4" fill="#c2dba9" opacity=".85" transform="rotate(-35 1080.2 548.2)"/>
<rect x="1087.1" y="540.2" width="6.2" height="1.9" fill="#c2dba9" opacity=".85" transform="rotate(-35 1087.1 540.2)"/>
<rect x="1085.6" y="533.2" width="6.5" height="2.4" fill="#c2dba9" opacity=".85" transform="rotate(-35 1085.6 533.2)"/>
<rect x="1068.9" y="548.1" width="7" height="3.3" fill="#c2dba9" opacity=".85" transform="rotate(-35 1068.9 548.1)"/>
<rect x="1069.1" y="549" width="3.4" height="1.6" fill="#c2dba9" opacity=".85" transform="rotate(-35 1069.1 549)"/>
<rect x="1085.3" y="549.8" width="3.4" height="4.3" fill="#c2dba9" opacity=".85" transform="rotate(-35 1085.3 549.8)"/>
<rect x="1075" y="549.3" width="4.6" height="2.1" fill="#c2dba9" opacity=".85" transform="rotate(-35 1075 549.3)"/>
<rect x="1065.4" y="552.6" width="6.4" height="3.9" fill="#c2dba9" opacity=".85" transform="rotate(-35 1065.4 552.6)"/>
<rect x="1065.9" y="527.4" width="6.7" height="3.1" fill="#c2dba9" opacity=".85" transform="rotate(-35 1065.9 527.4)"/>
<rect x="1074.4" y="536.1" width="5.7" height="2.9" fill="#c2dba9" opacity=".85" transform="rotate(-35 1074.4 536.1)"/>
<rect x="1075.2" y="525.6" width="3.4" height="1.6" fill="#c2dba9" opacity=".85" transform="rotate(-35 1075.2 525.6)"/>
<rect x="1079.5" y="537.1" width="4.4" height="2.5" fill="#c2dba9" opacity=".85" transform="rotate(-35 1079.5 537.1)"/>
<rect x="1071.4" y="554.8" width="6.9" height="2.3" fill="#c2dba9" opacity=".85" transform="rotate(-35 1071.4 554.8)"/>
<rect x="1070.7" y="531.8" width="4.8" height="2.7" fill="#c2dba9" opacity=".85" transform="rotate(-35 1070.7 531.8)"/>
<rect x="1077.8" y="546.3" width="3" height="4.2" fill="#c2dba9" opacity=".85" transform="rotate(-35 1077.8 546.3)"/>
<rect x="1068.4" y="540.2" width="6.5" height="4.5" fill="#c2dba9" opacity=".85" transform="rotate(-35 1068.4 540.2)"/>
<rect x="1070" y="542.1" width="3" height="1.8" fill="#c2dba9" opacity=".85" transform="rotate(-35 1070 542.1)"/>
<rect x="1072.7" y="544.6" width="3.2" height="2.3" fill="#c2dba9" opacity=".85" transform="rotate(-35 1072.7 544.6)"/>
<rect x="1063.1" y="532.8" width="5.7" height="2.7" fill="#c2dba9" opacity=".85" transform="rotate(-35 1063.1 532.8)"/>
<rect x="1066.3" y="546.7" width="3.9" height="2.5" fill="#c2dba9" opacity=".85" transform="rotate(-35 1066.3 546.7)"/>
<rect x="1081.8" y="543.6" width="6.8" height="1.9" fill="#c2dba9" opacity=".85" transform="rotate(-35 1081.8 543.6)"/>
<rect x="1063.9" y="539.7" width="6.3" height="2.1" fill="#c2dba9" opacity=".85" transform="rotate(-35 1063.9 539.7)"/>
<rect x="1074.1" y="548.9" width="4" height="2.8" fill="#c2dba9" opacity=".85" transform="rotate(-35 1074.1 548.9)"/>
<rect x="1087.4" y="535.3" width="6.4" height="1.6" fill="#c2dba9" opacity=".85" transform="rotate(-35 1087.4 535.3)"/>
<rect x="1086.6" y="543.1" width="6.5" height="2.9" fill="#c2dba9" opacity=".85" transform="rotate(-35 1086.6 543.1)"/>
<rect x="1194.7" y="514.8" width="4" height="4.3" fill="#c2dba9" opacity=".85" transform="rotate(-35 1194.7 514.8)"/>
<rect x="1206" y="495.3" width="6.9" height="2.2" fill="#c2dba9" opacity=".85" transform="rotate(-35 1206 495.3)"/>
<rect x="1202.9" y="521" width="4.6" height="3.5" fill="#c2dba9" opacity=".85" transform="rotate(-35 1202.9 521)"/>
<rect x="1215.6" y="507.7" width="5.2" height="3.8" fill="#c2dba9" opacity=".85" transform="rotate(-35 1215.6 507.7)"/>
<rect x="1176.4" y="519.7" width="2.2" height="3.8" fill="#c2dba9" opacity=".85" transform="rotate(-35 1176.4 519.7)"/>
<rect x="1197.7" y="537.9" width="5.2" height="2.4" fill="#c2dba9" opacity=".85" transform="rotate(-35 1197.7 537.9)"/>
<rect x="1204.1" y="523.7" width="5.2" height="3.6" fill="#c2dba9" opacity=".85" transform="rotate(-35 1204.1 523.7)"/>
<rect x="1200.3" y="519.1" width="4.6" height="3.2" fill="#c2dba9" opacity=".85" transform="rotate(-35 1200.3 519.1)"/>
<rect x="1185.6" y="522.3" width="5" height="1.5" fill="#c2dba9" opacity=".85" transform="rotate(-35 1185.6 522.3)"/>
<rect x="1189.4" y="530.4" width="6.8" height="3.4" fill="#c2dba9" opacity=".85" transform="rotate(-35 1189.4 530.4)"/>
<rect x="1208.4" y="504" width="3.2" height="2.2" fill="#c2dba9" opacity=".85" transform="rotate(-35 1208.4 504)"/>
<rect x="1216.2" y="510.1" width="3.5" height="1.6" fill="#c2dba9" opacity=".85" transform="rotate(-35 1216.2 510.1)"/>
<rect x="1173.6" y="515.2" width="4.1" height="2.3" fill="#c2dba9" opacity=".85" transform="rotate(-35 1173.6 515.2)"/>
<rect x="1182.6" y="495" width="3.1" height="1.6" fill="#c2dba9" opacity=".85" transform="rotate(-35 1182.6 495)"/>
<rect x="1186.1" y="528.2" width="5.4" height="2.1" fill="#c2dba9" opacity=".85" transform="rotate(-35 1186.1 528.2)"/>
<rect x="1201.5" y="495.3" width="4.5" height="2.1" fill="#c2dba9" opacity=".85" transform="rotate(-35 1201.5 495.3)"/>
<rect x="1209.3" y="512.5" width="6.1" height="2.2" fill="#c2dba9" opacity=".85" transform="rotate(-35 1209.3 512.5)"/>
<rect x="1199" y="535.6" width="3.5" height="4.4" fill="#c2dba9" opacity=".85" transform="rotate(-35 1199 535.6)"/>
<rect x="1183.8" y="515.3" width="3.1" height="2.8" fill="#c2dba9" opacity=".85" transform="rotate(-35 1183.8 515.3)"/>
<rect x="1182.1" y="494.9" width="2.7" height="2.7" fill="#c2dba9" opacity=".85" transform="rotate(-35 1182.1 494.9)"/>
<rect x="1200.9" y="538" width="2.7" height="1.7" fill="#c2dba9" opacity=".85" transform="rotate(-35 1200.9 538)"/>
<rect x="1210.2" y="520.6" width="6.5" height="4.2" fill="#c2dba9" opacity=".85" transform="rotate(-35 1210.2 520.6)"/>
<rect x="1192.2" y="491.2" width="6.7" height="2.5" fill="#c2dba9" opacity=".85" transform="rotate(-35 1192.2 491.2)"/>
<rect x="1204.9" y="536.3" width="5.7" height="1.6" fill="#c2dba9" opacity=".85" transform="rotate(-35 1204.9 536.3)"/>
<rect x="1186.8" y="502.3" width="3.9" height="2.5" fill="#c2dba9" opacity=".85" transform="rotate(-35 1186.8 502.3)"/>
<rect x="1195.7" y="516.1" width="3.4" height="2.6" fill="#c2dba9" opacity=".85" transform="rotate(-35 1195.7 516.1)"/>
<rect x="1203.8" y="512.7" width="6.8" height="2.1" fill="#c2dba9" opacity=".85" transform="rotate(-35 1203.8 512.7)"/>
<rect x="1180.4" y="532.1" width="6.1" height="2.8" fill="#c2dba9" opacity=".85" transform="rotate(-35 1180.4 532.1)"/>
<rect x="1212" y="520" width="3.9" height="4.3" fill="#c2dba9" opacity=".85" transform="rotate(-35 1212 520)"/>
<rect x="1200.5" y="528.6" width="6.5" height="1.6" fill="#c2dba9" opacity=".85" transform="rotate(-35 1200.5 528.6)"/>
<rect x="1175.2" y="526.5" width="5.8" height="1.6" fill="#c2dba9" opacity=".85" transform="rotate(-35 1175.2 526.5)"/>
<rect x="1201.3" y="516.3" width="6.6" height="2.3" fill="#c2dba9" opacity=".85" transform="rotate(-35 1201.3 516.3)"/>
<rect x="1194.6" y="492.3" width="3.7" height="2.3" fill="#c2dba9" opacity=".85" transform="rotate(-35 1194.6 492.3)"/>
<rect x="1214.7" y="510" width="3.3" height="3.6" fill="#c2dba9" opacity=".85" transform="rotate(-35 1214.7 510)"/>
<rect x="1189.5" y="526.5" width="2" height="3.8" fill="#c2dba9" opacity=".85" transform="rotate(-35 1189.5 526.5)"/>
<rect x="1212.9" y="505.4" width="6.7" height="1.6" fill="#c2dba9" opacity=".85" transform="rotate(-35 1212.9 505.4)"/>
<rect x="1196.8" y="531.5" width="6.8" height="4.4" fill="#c2dba9" opacity=".85" transform="rotate(-35 1196.8 531.5)"/>
<rect x="1185.1" y="522.9" width="4.1" height="3" fill="#c2dba9" opacity=".85" transform="rotate(-35 1185.1 522.9)"/>
<rect x="1205" y="510.5" width="6" height="3.7" fill="#c2dba9" opacity=".85" transform="rotate(-35 1205 510.5)"/>
<rect x="1205.1" y="496.1" width="5" height="2.5" fill="#c2dba9" opacity=".85" transform="rotate(-35 1205.1 496.1)"/>
<rect x="1188.4" y="528.1" width="5.9" height="1.7" fill="#c2dba9" opacity=".85" transform="rotate(-35 1188.4 528.1)"/>
<rect x="1202.3" y="534.7" width="3.2" height="1.7" fill="#c2dba9" opacity=".85" transform="rotate(-35 1202.3 534.7)"/>
<rect x="1213.9" y="518.8" width="3.6" height="4.4" fill="#c2dba9" opacity=".85" transform="rotate(-35 1213.9 518.8)"/>
<rect x="1214.2" y="499.1" width="3.3" height="1.8" fill="#c2dba9" opacity=".85" transform="rotate(-35 1214.2 499.1)"/>
<rect x="1210.1" y="524.6" width="5.5" height="2.8" fill="#c2dba9" opacity=".85" transform="rotate(-35 1210.1 524.6)"/>
<rect x="1196.7" y="530.4" width="5.1" height="3.5" fill="#c2dba9" opacity=".85" transform="rotate(-35 1196.7 530.4)"/>
<rect x="1194.7" y="492.9" width="5.3" height="1.9" fill="#c2dba9" opacity=".85" transform="rotate(-35 1194.7 492.9)"/>
<rect x="1202.6" y="504.1" width="4.8" height="2.6" fill="#c2dba9" opacity=".85" transform="rotate(-35 1202.6 504.1)"/>
<rect x="1194.1" y="504.3" width="3.2" height="2.2" fill="#c2dba9" opacity=".85" transform="rotate(-35 1194.1 504.3)"/>
<rect x="1209" y="533.5" width="4.9" height="2.5" fill="#c2dba9" opacity=".85" transform="rotate(-35 1209 533.5)"/>
<rect x="1174.4" y="529.5" width="4.5" height="2.2" fill="#c2dba9" opacity=".85" transform="rotate(-35 1174.4 529.5)"/>
<rect x="1202.5" y="496.9" width="7" height="1.8" fill="#c2dba9" opacity=".85" transform="rotate(-35 1202.5 496.9)"/>
<rect x="1171.8" y="518.4" width="6.2" height="4.2" fill="#c2dba9" opacity=".85" transform="rotate(-35 1171.8 518.4)"/>
<rect x="1208.6" y="518.3" width="2.6" height="2.1" fill="#c2dba9" opacity=".85" transform="rotate(-35 1208.6 518.3)"/>
<rect x="1214.6" y="511.9" width="6.7" height="2.6" fill="#c2dba9" opacity=".85" transform="rotate(-35 1214.6 511.9)"/>
<rect x="1206.6" y="503" width="3.3" height="3.8" fill="#c2dba9" opacity=".85" transform="rotate(-35 1206.6 503)"/>
<rect x="1203" y="512.4" width="5" height="3.4" fill="#c2dba9" opacity=".85" transform="rotate(-35 1203 512.4)"/>
<rect x="1198.2" y="529.3" width="2.7" height="2.1" fill="#c2dba9" opacity=".85" transform="rotate(-35 1198.2 529.3)"/>
<rect x="1194.4" y="533.6" width="5.3" height="2.1" fill="#c2dba9" opacity=".85" transform="rotate(-35 1194.4 533.6)"/>
<rect x="1209.8" y="516" width="5.4" height="2.1" fill="#c2dba9" opacity=".85" transform="rotate(-35 1209.8 516)"/>
<rect x="1190.5" y="525" width="6" height="3.1" fill="#c2dba9" opacity=".85" transform="rotate(-35 1190.5 525)"/>
<rect x="1202.6" y="518" width="4" height="3.2" fill="#c2dba9" opacity=".85" transform="rotate(-35 1202.6 518)"/>
<rect x="1190" y="509.4" width="2.8" height="3.6" fill="#c2dba9" opacity=".85" transform="rotate(-35 1190 509.4)"/>
<rect x="1183.3" y="521.9" width="3.5" height="4.4" fill="#c2dba9" opacity=".85" transform="rotate(-35 1183.3 521.9)"/>
<rect x="1187.5" y="531.7" width="3.8" height="2.7" fill="#c2dba9" opacity=".85" transform="rotate(-35 1187.5 531.7)"/>
<rect x="1212.1" y="497" width="3.8" height="2.1" fill="#c2dba9" opacity=".85" transform="rotate(-35 1212.1 497)"/>
<rect x="1193.4" y="504.3" width="2" height="4.2" fill="#c2dba9" opacity=".85" transform="rotate(-35 1193.4 504.3)"/>
<rect x="1174.1" y="525" width="4" height="4.1" fill="#c2dba9" opacity=".85" transform="rotate(-35 1174.1 525)"/>
<rect x="1184.8" y="517.4" width="2.1" height="3.2" fill="#c2dba9" opacity=".85" transform="rotate(-35 1184.8 517.4)"/>
<rect x="1179.3" y="497.3" width="2.4" height="3.4" fill="#c2dba9" opacity=".85" transform="rotate(-35 1179.3 497.3)"/>
<rect x="1182.3" y="527.4" width="2.7" height="2.3" fill="#c2dba9" opacity=".85" transform="rotate(-35 1182.3 527.4)"/>
<rect x="1170.2" y="511.9" width="2.5" height="3" fill="#c2dba9" opacity=".85" transform="rotate(-35 1170.2 511.9)"/>
<rect x="1203.6" y="492.8" width="3" height="1.9" fill="#c2dba9" opacity=".85" transform="rotate(-35 1203.6 492.8)"/>
<rect x="1219.1" y="506.7" width="4.4" height="1.7" fill="#c2dba9" opacity=".85" transform="rotate(-35 1219.1 506.7)"/>
<rect x="1209.5" y="508.3" width="6.5" height="3.4" fill="#c2dba9" opacity=".85" transform="rotate(-35 1209.5 508.3)"/>
<rect x="1199.7" y="506.4" width="5.9" height="2.2" fill="#c2dba9" opacity=".85" transform="rotate(-35 1199.7 506.4)"/>
<rect x="1175.3" y="527.5" width="6.1" height="2" fill="#c2dba9" opacity=".85" transform="rotate(-35 1175.3 527.5)"/>
<rect x="1198.3" y="529.9" width="4.6" height="2.7" fill="#c2dba9" opacity=".85" transform="rotate(-35 1198.3 529.9)"/>
<rect x="1204.2" y="523.3" width="5.6" height="4.2" fill="#c2dba9" opacity=".85" transform="rotate(-35 1204.2 523.3)"/>
<rect x="1213.9" y="519.6" width="5.8" height="1.6" fill="#c2dba9" opacity=".85" transform="rotate(-35 1213.9 519.6)"/>
<rect x="1199.7" y="508" width="5" height="3.2" fill="#c2dba9" opacity=".85" transform="rotate(-35 1199.7 508)"/>
<rect x="1185" y="505.5" width="4.1" height="3.2" fill="#c2dba9" opacity=".85" transform="rotate(-35 1185 505.5)"/>
<rect x="1176.2" y="523.8" width="4.2" height="2.8" fill="#c2dba9" opacity=".85" transform="rotate(-35 1176.2 523.8)"/>
<rect x="1215.2" y="517.8" width="4.4" height="2.2" fill="#c2dba9" opacity=".85" transform="rotate(-35 1215.2 517.8)"/>
<rect x="1197" y="493.9" width="4.3" height="2" fill="#c2dba9" opacity=".85" transform="rotate(-35 1197 493.9)"/>
<rect x="1186.6" y="516.3" width="2.6" height="2.8" fill="#c2dba9" opacity=".85" transform="rotate(-35 1186.6 516.3)"/>
<rect x="1209.5" y="523.7" width="4.6" height="1.6" fill="#c2dba9" opacity=".85" transform="rotate(-35 1209.5 523.7)"/>
<rect x="1190.1" y="509.8" width="5.7" height="3.8" fill="#c2dba9" opacity=".85" transform="rotate(-35 1190.1 509.8)"/>
<rect x="1189" y="514.6" width="4.5" height="2.6" fill="#c2dba9" opacity=".85" transform="rotate(-35 1189 514.6)"/>
<rect x="1221.3" y="542.8" width="6.3" height="4.5" fill="#c2dba9" opacity=".85" transform="rotate(-35 1221.3 542.8)"/>
<rect x="1213.2" y="527.1" width="3" height="4.4" fill="#c2dba9" opacity=".85" transform="rotate(-35 1213.2 527.1)"/>
<rect x="1197.4" y="546" width="6.6" height="2" fill="#c2dba9" opacity=".85" transform="rotate(-35 1197.4 546)"/>
<rect x="1219.1" y="526.3" width="2.3" height="2.6" fill="#c2dba9" opacity=".85" transform="rotate(-35 1219.1 526.3)"/>
<rect x="1215.3" y="537" width="6.5" height="2.3" fill="#c2dba9" opacity=".85" transform="rotate(-35 1215.3 537)"/>
<rect x="1217.7" y="538.1" width="4.5" height="4.3" fill="#c2dba9" opacity=".85" transform="rotate(-35 1217.7 538.1)"/>
<rect x="1217.4" y="554.9" width="4.5" height="2.5" fill="#c2dba9" opacity=".85" transform="rotate(-35 1217.4 554.9)"/>
<rect x="1222.5" y="547" width="2.8" height="4.3" fill="#c2dba9" opacity=".85" transform="rotate(-35 1222.5 547)"/>
<rect x="1207.7" y="527.9" width="2.8" height="3.9" fill="#c2dba9" opacity=".85" transform="rotate(-35 1207.7 527.9)"/>
<rect x="1224.8" y="554.6" width="5.2" height="2.6" fill="#c2dba9" opacity=".85" transform="rotate(-35 1224.8 554.6)"/>
<rect x="1224.4" y="534.3" width="4.9" height="4.1" fill="#c2dba9" opacity=".85" transform="rotate(-35 1224.4 534.3)"/>
<rect x="1229.2" y="557.2" width="5.1" height="2.7" fill="#c2dba9" opacity=".85" transform="rotate(-35 1229.2 557.2)"/>
<rect x="1217.7" y="535.2" width="7" height="3.2" fill="#c2dba9" opacity=".85" transform="rotate(-35 1217.7 535.2)"/>
<rect x="1204.9" y="558.5" width="4.2" height="2" fill="#c2dba9" opacity=".85" transform="rotate(-35 1204.9 558.5)"/>
<rect x="1214.8" y="540.6" width="6.1" height="2.3" fill="#c2dba9" opacity=".85" transform="rotate(-35 1214.8 540.6)"/>
<rect x="1203.6" y="529.8" width="4.9" height="3.5" fill="#c2dba9" opacity=".85" transform="rotate(-35 1203.6 529.8)"/>
<rect x="1214.7" y="545.8" width="2.2" height="1.9" fill="#c2dba9" opacity=".85" transform="rotate(-35 1214.7 545.8)"/>
<rect x="1206.2" y="536.2" width="4.6" height="4.2" fill="#c2dba9" opacity=".85" transform="rotate(-35 1206.2 536.2)"/>
<rect x="1220.8" y="552" width="5.3" height="1.6" fill="#c2dba9" opacity=".85" transform="rotate(-35 1220.8 552)"/>
<rect x="1225.7" y="545.2" width="2.5" height="2.6" fill="#c2dba9" opacity=".85" transform="rotate(-35 1225.7 545.2)"/>
<rect x="1217.2" y="560.1" width="4.9" height="2.1" fill="#c2dba9" opacity=".85" transform="rotate(-35 1217.2 560.1)"/>
<rect x="1206.2" y="535.3" width="2.7" height="4.3" fill="#c2dba9" opacity=".85" transform="rotate(-35 1206.2 535.3)"/>
<rect x="1215.3" y="552.7" width="2.5" height="3.4" fill="#c2dba9" opacity=".85" transform="rotate(-35 1215.3 552.7)"/>
<rect x="1226" y="532.2" width="4" height="2.3" fill="#c2dba9" opacity=".85" transform="rotate(-35 1226 532.2)"/>
<rect x="1229.4" y="546.2" width="4.8" height="2.6" fill="#c2dba9" opacity=".85" transform="rotate(-35 1229.4 546.2)"/>
<rect x="1207.7" y="534.4" width="6.7" height="3.7" fill="#c2dba9" opacity=".85" transform="rotate(-35 1207.7 534.4)"/>
<rect x="1215.2" y="564" width="2.2" height="3.1" fill="#c2dba9" opacity=".85" transform="rotate(-35 1215.2 564)"/>
<rect x="1207.7" y="550.4" width="2.3" height="3.8" fill="#c2dba9" opacity=".85" transform="rotate(-35 1207.7 550.4)"/>
<rect x="1228.3" y="546.2" width="6.7" height="1.9" fill="#c2dba9" opacity=".85" transform="rotate(-35 1228.3 546.2)"/>
<rect x="1219.4" y="559.8" width="4.5" height="3.4" fill="#c2dba9" opacity=".85" transform="rotate(-35 1219.4 559.8)"/>
<rect x="1217.9" y="537.3" width="3.5" height="2.4" fill="#c2dba9" opacity=".85" transform="rotate(-35 1217.9 537.3)"/>
<rect x="1231.2" y="550.7" width="5.9" height="3.6" fill="#c2dba9" opacity=".85" transform="rotate(-35 1231.2 550.7)"/>
<rect x="1231.5" y="545.7" width="5.7" height="2.9" fill="#c2dba9" opacity=".85" transform="rotate(-35 1231.5 545.7)"/>
<rect x="1214.4" y="531.6" width="3.1" height="1.8" fill="#c2dba9" opacity=".85" transform="rotate(-35 1214.4 531.6)"/>
<rect x="1215.4" y="548.9" width="3.7" height="3.7" fill="#c2dba9" opacity=".85" transform="rotate(-35 1215.4 548.9)"/>
<rect x="1209.4" y="527.7" width="5.6" height="2.3" fill="#c2dba9" opacity=".85" transform="rotate(-35 1209.4 527.7)"/>
<rect x="1203.8" y="540.6" width="5.9" height="3.1" fill="#c2dba9" opacity=".85" transform="rotate(-35 1203.8 540.6)"/>
<rect x="1213.6" y="561" width="6.8" height="2.2" fill="#c2dba9" opacity=".85" transform="rotate(-35 1213.6 561)"/>
<rect x="1216.6" y="543.3" width="3.3" height="2.2" fill="#c2dba9" opacity=".85" transform="rotate(-35 1216.6 543.3)"/>
<rect x="1214.3" y="525.6" width="5.7" height="2.5" fill="#c2dba9" opacity=".85" transform="rotate(-35 1214.3 525.6)"/>
<rect x="1222.5" y="537.2" width="3.2" height="4.2" fill="#c2dba9" opacity=".85" transform="rotate(-35 1222.5 537.2)"/>
<rect x="1204.8" y="532.8" width="5.3" height="4.4" fill="#c2dba9" opacity=".85" transform="rotate(-35 1204.8 532.8)"/>
<rect x="1198.8" y="548.5" width="5.5" height="4.1" fill="#c2dba9" opacity=".85" transform="rotate(-35 1198.8 548.5)"/>
<rect x="1200.9" y="551.5" width="4.9" height="2.4" fill="#c2dba9" opacity=".85" transform="rotate(-35 1200.9 551.5)"/>
<rect x="1218.4" y="560.3" width="2.4" height="4.2" fill="#c2dba9" opacity=".85" transform="rotate(-35 1218.4 560.3)"/>
<rect x="1216.8" y="547.6" width="2.5" height="4.3" fill="#c2dba9" opacity=".85" transform="rotate(-35 1216.8 547.6)"/>
<rect x="1211.2" y="551.2" width="2.1" height="1.6" fill="#c2dba9" opacity=".85" transform="rotate(-35 1211.2 551.2)"/>
<rect x="1209.9" y="530.1" width="5.5" height="3.7" fill="#c2dba9" opacity=".85" transform="rotate(-35 1209.9 530.1)"/>
<rect x="1227.7" y="551.2" width="3.8" height="4" fill="#c2dba9" opacity=".85" transform="rotate(-35 1227.7 551.2)"/>
<rect x="1222.2" y="527.9" width="2.3" height="4.1" fill="#c2dba9" opacity=".85" transform="rotate(-35 1222.2 527.9)"/>
<rect x="1230" y="535" width="2.5" height="2.1" fill="#c2dba9" opacity=".85" transform="rotate(-35 1230 535)"/>
<rect x="1176.4" y="561.9" width="6.2" height="3.9" fill="#c2dba9" opacity=".85" transform="rotate(-35 1176.4 561.9)"/>
<rect x="1169" y="549.1" width="5.2" height="2.4" fill="#c2dba9" opacity=".85" transform="rotate(-35 1169 549.1)"/>
<rect x="1177.5" y="562.9" width="5.8" height="2.1" fill="#c2dba9" opacity=".85" transform="rotate(-35 1177.5 562.9)"/>
<rect x="1172.3" y="569.4" width="2.1" height="2.3" fill="#c2dba9" opacity=".85" transform="rotate(-35 1172.3 569.4)"/>
<rect x="1173.3" y="573.3" width="3.8" height="2.5" fill="#c2dba9" opacity=".85" transform="rotate(-35 1173.3 573.3)"/>
<rect x="1181.9" y="557.5" width="6.3" height="3.4" fill="#c2dba9" opacity=".85" transform="rotate(-35 1181.9 557.5)"/>
<rect x="1181.3" y="562" width="4.2" height="3.8" fill="#c2dba9" opacity=".85" transform="rotate(-35 1181.3 562)"/>
<rect x="1170.2" y="571" width="4.7" height="2.1" fill="#c2dba9" opacity=".85" transform="rotate(-35 1170.2 571)"/>
<rect x="1177" y="556.3" width="6.1" height="2" fill="#c2dba9" opacity=".85" transform="rotate(-35 1177 556.3)"/>
<rect x="1179.5" y="560.1" width="5.8" height="4.4" fill="#c2dba9" opacity=".85" transform="rotate(-35 1179.5 560.1)"/>
<rect x="1182" y="560.3" width="4.5" height="3.9" fill="#c2dba9" opacity=".85" transform="rotate(-35 1182 560.3)"/>
<rect x="1177.8" y="570.3" width="3.7" height="4" fill="#c2dba9" opacity=".85" transform="rotate(-35 1177.8 570.3)"/>
<rect x="1174.4" y="575.5" width="3.4" height="2.1" fill="#c2dba9" opacity=".85" transform="rotate(-35 1174.4 575.5)"/>
<rect x="1172.8" y="549.3" width="2.5" height="3.4" fill="#c2dba9" opacity=".85" transform="rotate(-35 1172.8 549.3)"/>
<rect x="1182.8" y="566.9" width="5.5" height="3.9" fill="#c2dba9" opacity=".85" transform="rotate(-35 1182.8 566.9)"/>
<rect x="1170.9" y="553.1" width="4" height="2.7" fill="#c2dba9" opacity=".85" transform="rotate(-35 1170.9 553.1)"/>
<rect x="1177.3" y="557" width="6.4" height="1.6" fill="#c2dba9" opacity=".85" transform="rotate(-35 1177.3 557)"/>
<rect x="1176.4" y="567.9" width="6.5" height="3" fill="#c2dba9" opacity=".85" transform="rotate(-35 1176.4 567.9)"/>
<rect x="1168.2" y="570.3" width="3.2" height="2.9" fill="#c2dba9" opacity=".85" transform="rotate(-35 1168.2 570.3)"/>
<rect x="1166.5" y="557.3" width="5.8" height="3.4" fill="#c2dba9" opacity=".85" transform="rotate(-35 1166.5 557.3)"/>
<rect x="1171.7" y="567.4" width="2.8" height="4" fill="#c2dba9" opacity=".85" transform="rotate(-35 1171.7 567.4)"/>
<rect x="1170.5" y="548.3" width="2.8" height="2.8" fill="#c2dba9" opacity=".85" transform="rotate(-35 1170.5 548.3)"/>
<rect x="1041.6" y="482.5" width="2.6" height="2.9" fill="#c2dba9" opacity=".85" transform="rotate(-35 1041.6 482.5)"/>
<rect x="1045.1" y="486.8" width="3" height="2.4" fill="#c2dba9" opacity=".85" transform="rotate(-35 1045.1 486.8)"/>
<rect x="1036.3" y="481.2" width="2.8" height="2" fill="#c2dba9" opacity=".85" transform="rotate(-35 1036.3 481.2)"/>
<rect x="1040.1" y="495.7" width="4.6" height="2" fill="#c2dba9" opacity=".85" transform="rotate(-35 1040.1 495.7)"/>
<rect x="1037.1" y="493.8" width="6.9" height="3.7" fill="#c2dba9" opacity=".85" transform="rotate(-35 1037.1 493.8)"/>
<rect x="1051" y="495.9" width="2.5" height="2.7" fill="#c2dba9" opacity=".85" transform="rotate(-35 1051 495.9)"/>
<rect x="1052.4" y="489.1" width="5.7" height="2.8" fill="#c2dba9" opacity=".85" transform="rotate(-35 1052.4 489.1)"/>
<rect x="1043.7" y="497.5" width="2.5" height="2.1" fill="#c2dba9" opacity=".85" transform="rotate(-35 1043.7 497.5)"/>
<rect x="1038" y="491.2" width="4" height="3.9" fill="#c2dba9" opacity=".85" transform="rotate(-35 1038 491.2)"/>
<rect x="1036.6" y="483.4" width="5.2" height="2.9" fill="#c2dba9" opacity=".85" transform="rotate(-35 1036.6 483.4)"/>
<rect x="1046.8" y="496" width="4" height="3.7" fill="#c2dba9" opacity=".85" transform="rotate(-35 1046.8 496)"/>
<rect x="1047.7" y="486.4" width="4.9" height="3.7" fill="#c2dba9" opacity=".85" transform="rotate(-35 1047.7 486.4)"/>
<rect x="1034.1" y="492.3" width="5.6" height="4.1" fill="#c2dba9" opacity=".85" transform="rotate(-35 1034.1 492.3)"/>
<rect x="1041.8" y="481.7" width="6.3" height="3.5" fill="#c2dba9" opacity=".85" transform="rotate(-35 1041.8 481.7)"/>
<rect x="1034.1" y="484.8" width="3.6" height="3.4" fill="#c2dba9" opacity=".85" transform="rotate(-35 1034.1 484.8)"/>
<rect x="1047.4" y="493.7" width="5.9" height="3.6" fill="#c2dba9" opacity=".85" transform="rotate(-35 1047.4 493.7)"/>
<rect x="1035.2" y="486.4" width="4.1" height="2.9" fill="#c2dba9" opacity=".85" transform="rotate(-35 1035.2 486.4)"/>
<rect x="1033.5" y="485.6" width="5.4" height="4.3" fill="#c2dba9" opacity=".85" transform="rotate(-35 1033.5 485.6)"/>
<rect x="1044.6" y="497.4" width="5.9" height="2.7" fill="#c2dba9" opacity=".85" transform="rotate(-35 1044.6 497.4)"/>
<rect x="1026.2" y="490.6" width="2.2" height="3.1" fill="#c2dba9" opacity=".85" transform="rotate(-35 1026.2 490.6)"/>
<rect x="1344.7" y="509" width="6.7" height="3.1" fill="#c2dba9" opacity=".85" transform="rotate(-35 1344.7 509)"/>
<rect x="1346.1" y="505.4" width="4.7" height="3.7" fill="#c2dba9" opacity=".85" transform="rotate(-35 1346.1 505.4)"/>
<rect x="1332" y="499.3" width="6.1" height="3.1" fill="#c2dba9" opacity=".85" transform="rotate(-35 1332 499.3)"/>
<rect x="1331.8" y="506.2" width="3.1" height="3.6" fill="#c2dba9" opacity=".85" transform="rotate(-35 1331.8 506.2)"/>
<rect x="1333.2" y="506.6" width="2.6" height="4.5" fill="#c2dba9" opacity=".85" transform="rotate(-35 1333.2 506.6)"/>
<rect x="1338.5" y="502.3" width="3.4" height="2.7" fill="#c2dba9" opacity=".85" transform="rotate(-35 1338.5 502.3)"/>
<rect x="1346.4" y="500.6" width="4.1" height="3.6" fill="#c2dba9" opacity=".85" transform="rotate(-35 1346.4 500.6)"/>
<rect x="1336.9" y="505" width="3.1" height="3.7" fill="#c2dba9" opacity=".85" transform="rotate(-35 1336.9 505)"/>
<rect x="1346.7" y="496.8" width="3.1" height="3.9" fill="#c2dba9" opacity=".85" transform="rotate(-35 1346.7 496.8)"/>
<rect x="1336.4" y="503.5" width="2.6" height="3.8" fill="#c2dba9" opacity=".85" transform="rotate(-35 1336.4 503.5)"/>
<rect x="1342.9" y="491.1" width="4.3" height="3.2" fill="#c2dba9" opacity=".85" transform="rotate(-35 1342.9 491.1)"/>
<rect x="1341.5" y="511.6" width="3.8" height="3.4" fill="#c2dba9" opacity=".85" transform="rotate(-35 1341.5 511.6)"/>
<rect x="1343.8" y="490.2" width="4.3" height="2.4" fill="#c2dba9" opacity=".85" transform="rotate(-35 1343.8 490.2)"/>
<rect x="1336.6" y="498.7" width="6.2" height="2.6" fill="#c2dba9" opacity=".85" transform="rotate(-35 1336.6 498.7)"/>
<rect x="1343.1" y="495" width="3.9" height="2.3" fill="#c2dba9" opacity=".85" transform="rotate(-35 1343.1 495)"/>
<rect x="1336.1" y="502.3" width="2" height="3.7" fill="#c2dba9" opacity=".85" transform="rotate(-35 1336.1 502.3)"/>
<rect x="1339" y="505.8" width="3.5" height="2.9" fill="#c2dba9" opacity=".85" transform="rotate(-35 1339 505.8)"/>
<rect x="1362.8" y="483.5" width="5.3" height="2.6" fill="#c2dba9" opacity=".85" transform="rotate(-35 1362.8 483.5)"/>
<rect x="1378.3" y="476" width="2.3" height="4" fill="#c2dba9" opacity=".85" transform="rotate(-35 1378.3 476)"/>
<rect x="1377.3" y="475.1" width="2.7" height="4" fill="#c2dba9" opacity=".85" transform="rotate(-35 1377.3 475.1)"/>
<rect x="1369.2" y="479.1" width="2.1" height="4.4" fill="#c2dba9" opacity=".85" transform="rotate(-35 1369.2 479.1)"/>
<rect x="1367.2" y="475.8" width="2.5" height="1.9" fill="#c2dba9" opacity=".85" transform="rotate(-35 1367.2 475.8)"/>
<rect x="1370.9" y="488.8" width="3.7" height="2" fill="#c2dba9" opacity=".85" transform="rotate(-35 1370.9 488.8)"/>
<rect x="1377.3" y="475" width="2.8" height="4.2" fill="#c2dba9" opacity=".85" transform="rotate(-35 1377.3 475)"/>
<rect x="1363.1" y="474.4" width="5.3" height="4.2" fill="#c2dba9" opacity=".85" transform="rotate(-35 1363.1 474.4)"/>
<rect x="1372.2" y="471.1" width="3" height="3.6" fill="#c2dba9" opacity=".85" transform="rotate(-35 1372.2 471.1)"/>
<rect x="1361.5" y="478.3" width="4.2" height="4.1" fill="#c2dba9" opacity=".85" transform="rotate(-35 1361.5 478.3)"/>
<rect x="1365.2" y="478.3" width="3.2" height="1.9" fill="#c2dba9" opacity=".85" transform="rotate(-35 1365.2 478.3)"/>
<rect x="1367.6" y="480.1" width="4.3" height="1.9" fill="#c2dba9" opacity=".85" transform="rotate(-35 1367.6 480.1)"/>
<rect x="1363" y="480.4" width="4.7" height="4.1" fill="#c2dba9" opacity=".85" transform="rotate(-35 1363 480.4)"/>
<rect x="1379.2" y="480.4" width="4.3" height="3.2" fill="#c2dba9" opacity=".85" transform="rotate(-35 1379.2 480.4)"/>
<rect x="1344.4" y="578.9" width="3.9" height="2.8" fill="#c2dba9" opacity=".85" transform="rotate(-35 1344.4 578.9)"/>
<rect x="1353.2" y="589.1" width="5.2" height="3.4" fill="#c2dba9" opacity=".85" transform="rotate(-35 1353.2 589.1)"/>
<rect x="1359.2" y="591.9" width="5.4" height="4.3" fill="#c2dba9" opacity=".85" transform="rotate(-35 1359.2 591.9)"/>
<rect x="1344.2" y="602.1" width="4.6" height="3" fill="#c2dba9" opacity=".85" transform="rotate(-35 1344.2 602.1)"/>
<rect x="1351.8" y="588.5" width="5.6" height="3.4" fill="#c2dba9" opacity=".85" transform="rotate(-35 1351.8 588.5)"/>
<rect x="1344.1" y="601" width="3.8" height="2.9" fill="#c2dba9" opacity=".85" transform="rotate(-35 1344.1 601)"/>
<rect x="1339.6" y="588" width="3.1" height="2.8" fill="#c2dba9" opacity=".85" transform="rotate(-35 1339.6 588)"/>
<rect x="1342.1" y="594.9" width="6.1" height="2.4" fill="#c2dba9" opacity=".85" transform="rotate(-35 1342.1 594.9)"/>
<rect x="1353.6" y="582.1" width="4.5" height="2.3" fill="#c2dba9" opacity=".85" transform="rotate(-35 1353.6 582.1)"/>
<rect x="1338.2" y="589.4" width="5.3" height="3.9" fill="#c2dba9" opacity=".85" transform="rotate(-35 1338.2 589.4)"/>
<rect x="1346.7" y="596.9" width="3.5" height="3.3" fill="#c2dba9" opacity=".85" transform="rotate(-35 1346.7 596.9)"/>
<rect x="1343" y="580.7" width="2.2" height="3.7" fill="#c2dba9" opacity=".85" transform="rotate(-35 1343 580.7)"/>
<rect x="1356.7" y="583.2" width="2.2" height="2.4" fill="#c2dba9" opacity=".85" transform="rotate(-35 1356.7 583.2)"/>
<rect x="1355.2" y="590.2" width="6.6" height="3.3" fill="#c2dba9" opacity=".85" transform="rotate(-35 1355.2 590.2)"/>
<rect x="1344.2" y="579.6" width="6.5" height="3.3" fill="#c2dba9" opacity=".85" transform="rotate(-35 1344.2 579.6)"/>
<rect x="1342.9" y="582.6" width="5.5" height="3.3" fill="#c2dba9" opacity=".85" transform="rotate(-35 1342.9 582.6)"/>
<rect x="1347.7" y="584.1" width="5.3" height="2.9" fill="#c2dba9" opacity=".85" transform="rotate(-35 1347.7 584.1)"/>
<rect x="1350.3" y="585.6" width="2.9" height="1.6" fill="#c2dba9" opacity=".85" transform="rotate(-35 1350.3 585.6)"/>
<rect x="1351.8" y="576.8" width="5.3" height="2.6" fill="#c2dba9" opacity=".85" transform="rotate(-35 1351.8 576.8)"/>
<rect x="1354.7" y="578.9" width="4.8" height="2.3" fill="#c2dba9" opacity=".85" transform="rotate(-35 1354.7 578.9)"/>
<rect x="1347.5" y="598.6" width="3.6" height="2.8" fill="#c2dba9" opacity=".85" transform="rotate(-35 1347.5 598.6)"/>
<rect x="1342.7" y="579.5" width="2.3" height="3.2" fill="#c2dba9" opacity=".85" transform="rotate(-35 1342.7 579.5)"/>
<rect x="1354" y="591.2" width="6.1" height="3.2" fill="#c2dba9" opacity=".85" transform="rotate(-35 1354 591.2)"/>
<rect x="1357" y="585.4" width="2.1" height="2.7" fill="#c2dba9" opacity=".85" transform="rotate(-35 1357 585.4)"/>
<rect x="1188.6" y="485.8" width="6.9" height="2.9" fill="#c2dba9" opacity=".85" transform="rotate(-35 1188.6 485.8)"/>
<rect x="1196.2" y="491.3" width="5.2" height="2.1" fill="#c2dba9" opacity=".85" transform="rotate(-35 1196.2 491.3)"/>
<rect x="1201" y="490.8" width="2" height="3.6" fill="#c2dba9" opacity=".85" transform="rotate(-35 1201 490.8)"/>
<rect x="1209.9" y="495.4" width="2.4" height="4.1" fill="#c2dba9" opacity=".85" transform="rotate(-35 1209.9 495.4)"/>
<rect x="1201.3" y="490.8" width="5.6" height="2.2" fill="#c2dba9" opacity=".85" transform="rotate(-35 1201.3 490.8)"/>
<rect x="1199.4" y="486.6" width="2.3" height="3.8" fill="#c2dba9" opacity=".85" transform="rotate(-35 1199.4 486.6)"/>
<rect x="1197.1" y="482.8" width="5.6" height="1.8" fill="#c2dba9" opacity=".85" transform="rotate(-35 1197.1 482.8)"/>
<rect x="1191.9" y="485.1" width="4.3" height="4.3" fill="#c2dba9" opacity=".85" transform="rotate(-35 1191.9 485.1)"/>
<rect x="1199.7" y="497.9" width="5.6" height="1.5" fill="#c2dba9" opacity=".85" transform="rotate(-35 1199.7 497.9)"/>
<rect x="1211.2" y="490.6" width="6.1" height="1.7" fill="#c2dba9" opacity=".85" transform="rotate(-35 1211.2 490.6)"/>
<rect x="1195.5" y="496.3" width="2.8" height="4.1" fill="#c2dba9" opacity=".85" transform="rotate(-35 1195.5 496.3)"/>
<rect x="1196.6" y="490.2" width="3.8" height="3.2" fill="#c2dba9" opacity=".85" transform="rotate(-35 1196.6 490.2)"/>
<rect x="1189.3" y="492.5" width="2.7" height="3.9" fill="#c2dba9" opacity=".85" transform="rotate(-35 1189.3 492.5)"/>
<rect x="1192.7" y="494.9" width="5.1" height="2.8" fill="#c2dba9" opacity=".85" transform="rotate(-35 1192.7 494.9)"/>
<rect x="1190.7" y="494.7" width="6.7" height="3.9" fill="#c2dba9" opacity=".85" transform="rotate(-35 1190.7 494.7)"/>
<rect x="1193.1" y="488.2" width="2.3" height="4.4" fill="#c2dba9" opacity=".85" transform="rotate(-35 1193.1 488.2)"/>
<rect x="809.5" y="654.6" width="3.7" height="3.3" fill="#c2dba9" opacity=".85" transform="rotate(-35 809.5 654.6)"/>
<rect x="856.1" y="663.5" width="5" height="2.4" fill="#c2dba9" opacity=".85" transform="rotate(-35 856.1 663.5)"/>
<rect x="786" y="669.9" width="3.9" height="3.6" fill="#c2dba9" opacity=".85" transform="rotate(-35 786 669.9)"/>
<rect x="789.6" y="658.2" width="6" height="2.3" fill="#c2dba9" opacity=".85" transform="rotate(-35 789.6 658.2)"/>
<rect x="840.5" y="665.1" width="4.1" height="3.3" fill="#c2dba9" opacity=".85" transform="rotate(-35 840.5 665.1)"/>
<rect x="835.2" y="654.7" width="2.2" height="4" fill="#c2dba9" opacity=".85" transform="rotate(-35 835.2 654.7)"/>
<rect x="834.1" y="654.7" width="4.9" height="2.3" fill="#c2dba9" opacity=".85" transform="rotate(-35 834.1 654.7)"/>
<rect x="841.3" y="656.3" width="5.4" height="4.2" fill="#c2dba9" opacity=".85" transform="rotate(-35 841.3 656.3)"/>
<rect x="813.3" y="667.9" width="4.8" height="3.9" fill="#c2dba9" opacity=".85" transform="rotate(-35 813.3 667.9)"/>
<rect x="830.6" y="674.9" width="6.7" height="2.2" fill="#c2dba9" opacity=".85" transform="rotate(-35 830.6 674.9)"/>
<rect x="794.2" y="658.9" width="4.3" height="2.1" fill="#c2dba9" opacity=".85" transform="rotate(-35 794.2 658.9)"/>
<rect x="819" y="675.4" width="6" height="2.9" fill="#c2dba9" opacity=".85" transform="rotate(-35 819 675.4)"/>
<rect x="850.6" y="670.6" width="5.9" height="2.2" fill="#c2dba9" opacity=".85" transform="rotate(-35 850.6 670.6)"/>
<rect x="786.8" y="659.6" width="6.4" height="3.1" fill="#c2dba9" opacity=".85" transform="rotate(-35 786.8 659.6)"/>
<rect x="789.6" y="666.4" width="2.9" height="2.1" fill="#c2dba9" opacity=".85" transform="rotate(-35 789.6 666.4)"/>
<rect x="834.1" y="674.1" width="3.8" height="3.2" fill="#c2dba9" opacity=".85" transform="rotate(-35 834.1 674.1)"/>
<rect x="796.5" y="670" width="2.7" height="1.6" fill="#c2dba9" opacity=".85" transform="rotate(-35 796.5 670)"/>
<rect x="844.5" y="664.9" width="2.5" height="3.4" fill="#c2dba9" opacity=".85" transform="rotate(-35 844.5 664.9)"/>
<rect x="823.7" y="660.4" width="5" height="2.5" fill="#c2dba9" opacity=".85" transform="rotate(-35 823.7 660.4)"/>
<rect x="814.3" y="664.8" width="2.2" height="4.5" fill="#c2dba9" opacity=".85" transform="rotate(-35 814.3 664.8)"/>
<rect x="838.6" y="658.8" width="4.8" height="2.3" fill="#c2dba9" opacity=".85" transform="rotate(-35 838.6 658.8)"/>
<rect x="824.8" y="657.3" width="6.7" height="3.8" fill="#c2dba9" opacity=".85" transform="rotate(-35 824.8 657.3)"/>
<rect x="836.5" y="654.3" width="3.3" height="1.6" fill="#c2dba9" opacity=".85" transform="rotate(-35 836.5 654.3)"/>
<rect x="825.2" y="669.9" width="2.4" height="1.7" fill="#c2dba9" opacity=".85" transform="rotate(-35 825.2 669.9)"/>
<rect x="785.1" y="661" width="4.3" height="4.3" fill="#c2dba9" opacity=".85" transform="rotate(-35 785.1 661)"/>
<rect x="828.6" y="663.4" width="5" height="2.7" fill="#c2dba9" opacity=".85" transform="rotate(-35 828.6 663.4)"/>
<rect x="848.6" y="673" width="3.3" height="3.2" fill="#c2dba9" opacity=".85" transform="rotate(-35 848.6 673)"/>
<rect x="795.2" y="655.9" width="5.3" height="2.7" fill="#c2dba9" opacity=".85" transform="rotate(-35 795.2 655.9)"/>
<rect x="804.8" y="666.5" width="6.8" height="4.5" fill="#c2dba9" opacity=".85" transform="rotate(-35 804.8 666.5)"/>
<rect x="821.4" y="667.3" width="3.3" height="2.6" fill="#c2dba9" opacity=".85" transform="rotate(-35 821.4 667.3)"/>
<rect x="851.2" y="658.5" width="6.2" height="1.6" fill="#c2dba9" opacity=".85" transform="rotate(-35 851.2 658.5)"/>
<rect x="827.6" y="655.2" width="5.2" height="4.5" fill="#c2dba9" opacity=".85" transform="rotate(-35 827.6 655.2)"/>
<rect x="834.3" y="666.6" width="5.8" height="4.3" fill="#c2dba9" opacity=".85" transform="rotate(-35 834.3 666.6)"/>
<rect x="810.3" y="659.1" width="5" height="3.8" fill="#c2dba9" opacity=".85" transform="rotate(-35 810.3 659.1)"/>
<rect x="838" y="669.2" width="3.3" height="1.9" fill="#c2dba9" opacity=".85" transform="rotate(-35 838 669.2)"/>
<rect x="803.7" y="665.6" width="3.2" height="1.9" fill="#c2dba9" opacity=".85" transform="rotate(-35 803.7 665.6)"/>
<rect x="818" y="663.8" width="5.6" height="2.1" fill="#c2dba9" opacity=".85" transform="rotate(-35 818 663.8)"/>
<rect x="857.5" y="667.6" width="3.1" height="4.3" fill="#c2dba9" opacity=".85" transform="rotate(-35 857.5 667.6)"/>
<rect x="845.2" y="656.6" width="2.7" height="2.8" fill="#c2dba9" opacity=".85" transform="rotate(-35 845.2 656.6)"/>
<rect x="851.6" y="671.6" width="6.2" height="3.4" fill="#c2dba9" opacity=".85" transform="rotate(-35 851.6 671.6)"/>
<rect x="797.7" y="667.1" width="6.1" height="2.9" fill="#c2dba9" opacity=".85" transform="rotate(-35 797.7 667.1)"/>
<rect x="809.5" y="661.7" width="3.1" height="1.7" fill="#c2dba9" opacity=".85" transform="rotate(-35 809.5 661.7)"/>
<rect x="813.3" y="656.3" width="2.7" height="4.1" fill="#c2dba9" opacity=".85" transform="rotate(-35 813.3 656.3)"/>
<rect x="817.4" y="672.7" width="2.8" height="2.3" fill="#c2dba9" opacity=".85" transform="rotate(-35 817.4 672.7)"/>
<rect x="832.3" y="659.1" width="2.8" height="3" fill="#c2dba9" opacity=".85" transform="rotate(-35 832.3 659.1)"/>
<rect x="804.2" y="675.4" width="2.6" height="4.4" fill="#c2dba9" opacity=".85" transform="rotate(-35 804.2 675.4)"/>
<rect x="855.5" y="669" width="5.3" height="2.1" fill="#c2dba9" opacity=".85" transform="rotate(-35 855.5 669)"/>
<rect x="798.8" y="665.9" width="3.3" height="2.1" fill="#c2dba9" opacity=".85" transform="rotate(-35 798.8 665.9)"/>
<rect x="793.8" y="674" width="7" height="4.3" fill="#c2dba9" opacity=".85" transform="rotate(-35 793.8 674)"/>
<rect x="837.6" y="668.7" width="6.5" height="1.7" fill="#c2dba9" opacity=".85" transform="rotate(-35 837.6 668.7)"/>
<rect x="816.8" y="658.6" width="6.9" height="1.5" fill="#c2dba9" opacity=".85" transform="rotate(-35 816.8 658.6)"/>
<rect x="828.2" y="658.4" width="2.7" height="1.5" fill="#c2dba9" opacity=".85" transform="rotate(-35 828.2 658.4)"/>
<rect x="834.3" y="657.4" width="2.9" height="2.8" fill="#c2dba9" opacity=".85" transform="rotate(-35 834.3 657.4)"/>
<rect x="835.9" y="662.1" width="4.9" height="1.9" fill="#c2dba9" opacity=".85" transform="rotate(-35 835.9 662.1)"/>
<rect x="834.9" y="674.5" width="5.6" height="2.1" fill="#c2dba9" opacity=".85" transform="rotate(-35 834.9 674.5)"/>
<rect x="830.4" y="666.7" width="5" height="3" fill="#c2dba9" opacity=".85" transform="rotate(-35 830.4 666.7)"/>
<rect x="817.3" y="670.4" width="5.1" height="3.6" fill="#c2dba9" opacity=".85" transform="rotate(-35 817.3 670.4)"/>
<rect x="831.5" y="656.5" width="3" height="1.7" fill="#c2dba9" opacity=".85" transform="rotate(-35 831.5 656.5)"/>
<rect x="817.2" y="657.4" width="5.6" height="1.7" fill="#c2dba9" opacity=".85" transform="rotate(-35 817.2 657.4)"/>
<rect x="828.6" y="658.6" width="6.2" height="4.1" fill="#c2dba9" opacity=".85" transform="rotate(-35 828.6 658.6)"/>
<rect x="815" y="665.1" width="6.6" height="2.9" fill="#c2dba9" opacity=".85" transform="rotate(-35 815 665.1)"/>
<rect x="834.3" y="660.5" width="2.9" height="4" fill="#c2dba9" opacity=".85" transform="rotate(-35 834.3 660.5)"/>
<rect x="809.1" y="668.6" width="3.9" height="3.3" fill="#c2dba9" opacity=".85" transform="rotate(-35 809.1 668.6)"/>
<rect x="848.8" y="665.3" width="4.2" height="3" fill="#c2dba9" opacity=".85" transform="rotate(-35 848.8 665.3)"/>
<rect x="844.5" y="672" width="6.1" height="4.1" fill="#c2dba9" opacity=".85" transform="rotate(-35 844.5 672)"/>
<rect x="805.4" y="674.1" width="3.9" height="3.8" fill="#c2dba9" opacity=".85" transform="rotate(-35 805.4 674.1)"/>
<rect x="854.6" y="669.2" width="6.8" height="3" fill="#c2dba9" opacity=".85" transform="rotate(-35 854.6 669.2)"/>
<rect x="791" y="664.3" width="4.7" height="1.6" fill="#c2dba9" opacity=".85" transform="rotate(-35 791 664.3)"/>
<rect x="700.8" y="666.9" width="2.9" height="1.8" fill="#c2dba9" opacity=".85" transform="rotate(-35 700.8 666.9)"/>
<rect x="679.9" y="677.9" width="2.2" height="1.8" fill="#c2dba9" opacity=".85" transform="rotate(-35 679.9 677.9)"/>
<rect x="673.7" y="663.4" width="2.1" height="3.3" fill="#c2dba9" opacity=".85" transform="rotate(-35 673.7 663.4)"/>
<rect x="651.1" y="664.3" width="5.5" height="1.8" fill="#c2dba9" opacity=".85" transform="rotate(-35 651.1 664.3)"/>
<rect x="706" y="661.2" width="2.2" height="1.9" fill="#c2dba9" opacity=".85" transform="rotate(-35 706 661.2)"/>
<rect x="648.2" y="668.3" width="3.4" height="1.9" fill="#c2dba9" opacity=".85" transform="rotate(-35 648.2 668.3)"/>
<rect x="666.2" y="670.3" width="5" height="4.1" fill="#c2dba9" opacity=".85" transform="rotate(-35 666.2 670.3)"/>
<rect x="700.5" y="674.6" width="5.7" height="2" fill="#c2dba9" opacity=".85" transform="rotate(-35 700.5 674.6)"/>
<rect x="700" y="658.5" width="3.9" height="2.8" fill="#c2dba9" opacity=".85" transform="rotate(-35 700 658.5)"/>
<rect x="697.4" y="661.3" width="4" height="4.3" fill="#c2dba9" opacity=".85" transform="rotate(-35 697.4 661.3)"/>
<rect x="684.4" y="661.7" width="3.2" height="2.5" fill="#c2dba9" opacity=".85" transform="rotate(-35 684.4 661.7)"/>
<rect x="639" y="672.3" width="6" height="4.2" fill="#c2dba9" opacity=".85" transform="rotate(-35 639 672.3)"/>
<rect x="696.5" y="658.7" width="2.3" height="3.1" fill="#c2dba9" opacity=".85" transform="rotate(-35 696.5 658.7)"/>
<rect x="722" y="665.2" width="3.2" height="2.8" fill="#c2dba9" opacity=".85" transform="rotate(-35 722 665.2)"/>
<rect x="661.7" y="663.1" width="4.7" height="1.7" fill="#c2dba9" opacity=".85" transform="rotate(-35 661.7 663.1)"/>
<rect x="650.8" y="671.2" width="2.1" height="1.9" fill="#c2dba9" opacity=".85" transform="rotate(-35 650.8 671.2)"/>
<rect x="718.9" y="666.2" width="6.7" height="3.4" fill="#c2dba9" opacity=".85" transform="rotate(-35 718.9 666.2)"/>
<rect x="695.4" y="658.4" width="6.4" height="1.6" fill="#c2dba9" opacity=".85" transform="rotate(-35 695.4 658.4)"/>
<rect x="665.4" y="663.6" width="5.4" height="2.3" fill="#c2dba9" opacity=".85" transform="rotate(-35 665.4 663.6)"/>
<rect x="638.3" y="665.2" width="5.1" height="2.3" fill="#c2dba9" opacity=".85" transform="rotate(-35 638.3 665.2)"/>
<rect x="650.6" y="667.1" width="6.8" height="2.4" fill="#c2dba9" opacity=".85" transform="rotate(-35 650.6 667.1)"/>
<rect x="667.6" y="676.3" width="2.6" height="3.3" fill="#c2dba9" opacity=".85" transform="rotate(-35 667.6 676.3)"/>
<rect x="711" y="665.9" width="3.3" height="2.9" fill="#c2dba9" opacity=".85" transform="rotate(-35 711 665.9)"/>
<rect x="663.1" y="667.1" width="2.6" height="1.9" fill="#c2dba9" opacity=".85" transform="rotate(-35 663.1 667.1)"/>
<rect x="672.2" y="674.8" width="3.4" height="2.2" fill="#c2dba9" opacity=".85" transform="rotate(-35 672.2 674.8)"/>
<rect x="708.3" y="672.3" width="6.2" height="3.3" fill="#c2dba9" opacity=".85" transform="rotate(-35 708.3 672.3)"/>
<rect x="647.2" y="664.2" width="3" height="3.6" fill="#c2dba9" opacity=".85" transform="rotate(-35 647.2 664.2)"/>
<rect x="647.7" y="670" width="5.1" height="2.9" fill="#c2dba9" opacity=".85" transform="rotate(-35 647.7 670)"/>
<rect x="671.8" y="673" width="3.1" height="3" fill="#c2dba9" opacity=".85" transform="rotate(-35 671.8 673)"/>
<rect x="654.4" y="673.6" width="2.1" height="2.6" fill="#c2dba9" opacity=".85" transform="rotate(-35 654.4 673.6)"/>
<rect x="694.2" y="663.9" width="4.8" height="3" fill="#c2dba9" opacity=".85" transform="rotate(-35 694.2 663.9)"/>
<rect x="670.3" y="678.7" width="3.5" height="3.8" fill="#c2dba9" opacity=".85" transform="rotate(-35 670.3 678.7)"/>
<rect x="686.3" y="670.4" width="6.4" height="2.8" fill="#c2dba9" opacity=".85" transform="rotate(-35 686.3 670.4)"/>
<rect x="705.9" y="670.6" width="4.2" height="3.7" fill="#c2dba9" opacity=".85" transform="rotate(-35 705.9 670.6)"/>
<rect x="696.5" y="671.3" width="6.8" height="3.7" fill="#c2dba9" opacity=".85" transform="rotate(-35 696.5 671.3)"/>
<rect x="694.7" y="673.3" width="3.8" height="3.5" fill="#c2dba9" opacity=".85" transform="rotate(-35 694.7 673.3)"/>
<rect x="649.1" y="661.2" width="6.1" height="3.1" fill="#c2dba9" opacity=".85" transform="rotate(-35 649.1 661.2)"/>
<rect x="677.3" y="658.5" width="5.8" height="2.9" fill="#c2dba9" opacity=".85" transform="rotate(-35 677.3 658.5)"/>
<rect x="688.2" y="659" width="6.6" height="1.9" fill="#c2dba9" opacity=".85" transform="rotate(-35 688.2 659)"/>
<rect x="682" y="667.5" width="5.8" height="3.3" fill="#c2dba9" opacity=".85" transform="rotate(-35 682 667.5)"/>
<rect x="635.9" y="668.1" width="4.9" height="2.8" fill="#c2dba9" opacity=".85" transform="rotate(-35 635.9 668.1)"/>
<rect x="688.8" y="658" width="5" height="2.6" fill="#c2dba9" opacity=".85" transform="rotate(-35 688.8 658)"/>
<rect x="650.9" y="670.2" width="5.6" height="2.4" fill="#c2dba9" opacity=".85" transform="rotate(-35 650.9 670.2)"/>
<rect x="654.1" y="673.2" width="3.9" height="2.5" fill="#c2dba9" opacity=".85" transform="rotate(-35 654.1 673.2)"/>
<rect x="689.6" y="658.1" width="4.5" height="2.8" fill="#c2dba9" opacity=".85" transform="rotate(-35 689.6 658.1)"/>
<rect x="690" y="673.6" width="2.7" height="3.2" fill="#c2dba9" opacity=".85" transform="rotate(-35 690 673.6)"/>
<rect x="668.4" y="666.4" width="6.6" height="2.5" fill="#c2dba9" opacity=".85" transform="rotate(-35 668.4 666.4)"/>
<rect x="702.8" y="659.6" width="6.8" height="2.1" fill="#c2dba9" opacity=".85" transform="rotate(-35 702.8 659.6)"/>
<rect x="641.6" y="672.7" width="2.1" height="1.6" fill="#c2dba9" opacity=".85" transform="rotate(-35 641.6 672.7)"/>
<rect x="650.9" y="664.9" width="6.6" height="3.8" fill="#c2dba9" opacity=".85" transform="rotate(-35 650.9 664.9)"/>
<rect x="636.3" y="665.4" width="4.6" height="3.1" fill="#c2dba9" opacity=".85" transform="rotate(-35 636.3 665.4)"/>
<rect x="668.9" y="661.7" width="3.8" height="3.3" fill="#c2dba9" opacity=".85" transform="rotate(-35 668.9 661.7)"/>
<rect x="654" y="676.6" width="5.4" height="3.1" fill="#c2dba9" opacity=".85" transform="rotate(-35 654 676.6)"/>
<rect x="702.4" y="671.9" width="4" height="3.2" fill="#c2dba9" opacity=".85" transform="rotate(-35 702.4 671.9)"/>
<rect x="642.3" y="663.4" width="6.8" height="3" fill="#c2dba9" opacity=".85" transform="rotate(-35 642.3 663.4)"/>
<rect x="646.9" y="671.2" width="7" height="2.5" fill="#c2dba9" opacity=".85" transform="rotate(-35 646.9 671.2)"/>
<rect x="640.1" y="666.1" width="2.9" height="2.5" fill="#c2dba9" opacity=".85" transform="rotate(-35 640.1 666.1)"/>
<rect x="720.5" y="666.6" width="4.6" height="1.8" fill="#c2dba9" opacity=".85" transform="rotate(-35 720.5 666.6)"/>
<rect x="709.5" y="662.4" width="6.1" height="4.5" fill="#c2dba9" opacity=".85" transform="rotate(-35 709.5 662.4)"/>
<rect x="702.3" y="663.4" width="2.8" height="2.4" fill="#c2dba9" opacity=".85" transform="rotate(-35 702.3 663.4)"/>
<rect x="648.1" y="667.4" width="2.9" height="2" fill="#c2dba9" opacity=".85" transform="rotate(-35 648.1 667.4)"/>
<rect x="656.1" y="661.8" width="3.8" height="4.5" fill="#c2dba9" opacity=".85" transform="rotate(-35 656.1 661.8)"/>
<rect x="673.9" y="666.3" width="4.1" height="3.9" fill="#c2dba9" opacity=".85" transform="rotate(-35 673.9 666.3)"/>
<rect x="666.9" y="676.6" width="2" height="2.4" fill="#c2dba9" opacity=".85" transform="rotate(-35 666.9 676.6)"/>
<rect x="698.9" y="661" width="5.3" height="2.1" fill="#c2dba9" opacity=".85" transform="rotate(-35 698.9 661)"/>
<rect x="646.5" y="668.1" width="3.3" height="3.4" fill="#c2dba9" opacity=".85" transform="rotate(-35 646.5 668.1)"/>
<rect x="635.9" y="665.8" width="4.9" height="2.7" fill="#c2dba9" opacity=".85" transform="rotate(-35 635.9 665.8)"/>
<rect x="692.9" y="671" width="5.8" height="1.8" fill="#c2dba9" opacity=".85" transform="rotate(-35 692.9 671)"/>
<rect x="695" y="670.7" width="4.6" height="4" fill="#c2dba9" opacity=".85" transform="rotate(-35 695 670.7)"/>
<rect x="649.4" y="661.6" width="2.3" height="1.5" fill="#c2dba9" opacity=".85" transform="rotate(-35 649.4 661.6)"/>
<path d="M471 517C474.3 512.2 484.2 511 492 512C499.8 513 513.3 516 518 523C522.7 530 520.8 545.8 520 554C519.2 562.2 516.3 567.3 513 572C509.7 576.7 507.5 580.5 500 582C492.5 583.5 473.5 585.7 468 581C462.5 576.3 466.3 560.7 467 554C467.7 547.3 471.3 547.2 472 541C472.7 534.8 467.7 521.8 471 517Z" fill="#d9ecc8"/>
<path d="M471 517C474.3 512.2 484.2 511 492 512C499.8 513 513.3 516 518 523C522.7 530 520.8 545.8 520 554C519.2 562.2 516.3 567.3 513 572C509.7 576.7 507.5 580.5 500 582C492.5 583.5 473.5 585.7 468 581C462.5 576.3 466.3 560.7 467 554C467.7 547.3 471.3 547.2 472 541C472.7 534.8 467.7 521.8 471 517Z" fill="url(#wet)"/>
<path d="M313 640C316 628.8 327 618.8 331 619C335 619.2 333.8 638.2 337 641C340.2 643.8 351.2 633.3 350 636C348.8 638.7 332.5 649.2 330 657C327.5 664.8 337.8 678.2 335 683C332.2 687.8 316.7 693.2 313 686C309.3 678.8 310 651.2 313 640Z" fill="#d9ecc8"/>
<path d="M313 640C316 628.8 327 618.8 331 619C335 619.2 333.8 638.2 337 641C340.2 643.8 351.2 633.3 350 636C348.8 638.7 332.5 649.2 330 657C327.5 664.8 337.8 678.2 335 683C332.2 687.8 316.7 693.2 313 686C309.3 678.8 310 651.2 313 640Z" fill="url(#wet)"/>
<path d="M720 318C727.5 308.7 738.7 307 750 304C761.3 301 780 298.7 788 300C796 301.3 799.3 306.2 798 312C796.7 317.8 786.3 326.7 780 335C773.7 343.3 765.3 354.2 760 362C754.7 369.8 754 374.7 748 382C742 389.3 732.3 399.3 724 406C715.7 412.7 707 417.2 698 422C689 426.8 679.7 430.7 670 435C660.3 439.3 648 443.5 640 448C632 452.5 626.7 456.7 622 462C617.3 467.3 614 470.3 612 480C610 489.7 609 507 610 520C611 533 619 552 618 558C617 564 608.7 559.3 604 556C599.3 552.7 593.7 545.3 590 538C586.3 530.7 584.3 519 582 512C579.7 505 574.7 502.3 576 496C577.3 489.7 584 481.3 590 474C596 466.7 602 460.2 612 452C622 443.8 637 434.5 650 425C663 415.5 680.8 405.8 690 395C699.2 384.2 700 372.8 705 360C710 347.2 712.5 327.3 720 318Z" fill="url(#wet)"/>
<path d="M1011 266C1014 261 1027.2 262.8 1030 266C1032.8 269.2 1029.3 279.3 1028 285C1026.7 290.7 1024.7 298.2 1022 300C1019.3 301.8 1013.8 301.7 1012 296C1010.2 290.3 1008 271 1011 266Z" fill="url(#wet)"/>
<path d="M1030 315C1032 314 1044 325.2 1052 334C1060 342.8 1070.8 358.7 1078 368C1085.2 377.3 1093.8 385.5 1095 390C1096.2 394.5 1090.8 399.2 1085 395C1079.2 390.8 1067.5 374.2 1060 365C1052.5 355.8 1045 348.3 1040 340C1035 331.7 1028 316 1030 315Z" fill="url(#wet)"/>
<path d="M1023 440C1025.8 435.8 1035.5 440.8 1040 445C1044.5 449.2 1050 459.5 1050 465C1050 470.5 1044.5 477.2 1040 478C1035.5 478.8 1025.8 476.3 1023 470C1020.2 463.7 1020.2 444.2 1023 440Z" fill="url(#wet)"/>
<path d="M1093 416C1099.5 412.3 1108.3 413.2 1114 415C1119.7 416.8 1124.7 421.7 1127 427C1129.3 432.3 1127.3 440.2 1128 447C1128.7 453.8 1129.8 461.5 1131 468C1132.2 474.5 1132.3 480.3 1135 486C1137.7 491.7 1143.2 496.3 1147 502C1150.8 507.7 1154 515.7 1158 520C1162 524.3 1168.5 523.7 1171 528C1173.5 532.3 1172.2 540.5 1173 546C1173.8 551.5 1174 556.3 1176 561C1178 565.7 1184.5 568.8 1185 574C1185.5 579.2 1178.3 586.3 1179 592C1179.7 597.7 1185.2 603.2 1189 608C1192.8 612.8 1199.5 617.5 1202 621C1204.5 624.5 1205.3 626.8 1204 629C1202.7 631.2 1198.3 633.7 1194 634C1189.7 634.3 1183.7 633.2 1178 631C1172.3 628.8 1162.5 624.8 1160 621C1157.5 617.2 1164.7 612.3 1163 608C1161.3 603.7 1155.2 599.7 1150 595C1144.8 590.3 1139 585.7 1132 580C1125 574.3 1116.2 567.5 1108 561C1099.8 554.5 1090.3 547.8 1083 541C1075.7 534.2 1069.3 526.5 1064 520C1058.7 513.5 1053.5 507.2 1051 502C1048.5 496.8 1047.7 493.3 1049 489C1050.3 484.7 1056.2 481.2 1059 476C1061.8 470.8 1063.3 464.5 1066 458C1068.7 451.5 1070.5 444 1075 437C1079.5 430 1086.5 419.7 1093 416Z" fill="#aad3df"/>
<path d="M823 262C821.3 265.3 816.8 274 813 282C809.2 290 805.2 301.8 800 310C794.8 318.2 788.5 322.3 782 331C775.5 339.7 766.3 354.2 761 362C755.7 369.8 756 370.7 750 378C744 385.3 733.5 398.7 725 406C716.5 413.3 707.7 417.5 699 422C690.3 426.5 682.3 429 673 433C663.7 437 651.7 441.5 643 446C634.3 450.5 626.5 454.7 621 460C615.5 465.3 612.2 471 610 478C607.8 485 607.8 492.3 608 502C608.2 511.7 608 526 611 536C614 546 620.7 553.8 626 562C631.3 570.2 639 576.8 643 585C647 593.2 647.5 603.8 650 611C652.5 618.2 654.2 624.2 658 628C661.8 631.8 666.2 631.2 673 634C679.8 636.8 690.3 640.2 699 645C707.7 649.8 717.8 655.5 725 663C732.2 670.5 739.2 685.5 742 690" fill="none" stroke="#aad3df" stroke-width="9" stroke-linecap="round"/>
<path d="M750 378C745.8 382.7 733.5 398.7 725 406C716.5 413.3 707.7 417.5 699 422C690.3 426.5 682.3 429 673 433C663.7 437 651.7 441.5 643 446C634.3 450.5 626.5 454.7 621 460C615.5 465.3 611.8 475 610 478" fill="none" stroke="#aad3df" stroke-width="13"/>
<path d="M658 628C660.5 629 666.2 631.2 673 634C679.8 636.8 690.3 640.2 699 645C707.7 649.8 717.8 655.5 725 663C732.2 670.5 739.2 685.5 742 690" fill="none" stroke="#aad3df" stroke-width="12"/>
<path d="M583 507C583.8 510.5 584.2 520.2 588 528C591.8 535.8 600 545.3 606 554C612 562.7 618.3 572.7 624 580C629.7 587.3 635.3 592.7 640 598C644.7 603.3 650 609.7 652 612" fill="none" stroke="#aad3df" stroke-width="3"/>
<path d="M790 300C786.7 303.3 777.5 312.5 770 320C762.5 327.5 753.3 335.8 745 345C736.7 354.2 729.2 365.8 720 375C710.8 384.2 701.7 391.7 690 400C678.3 408.3 661.7 416.7 650 425C638.3 433.3 625 445.8 620 450" fill="none" stroke="#aad3df" stroke-width="2.5"/>
<path d="M838 266C838.7 270 842.5 281 842 290C841.5 299 837.3 310.8 835 320C832.7 329.2 829.2 340.8 828 345" fill="none" stroke="#aad3df" stroke-width="2"/>
<path d="M312.7 289 L314.3 288.8 L316.2 287.9 L317.4 288.9 L318.4 290.9 L320.1 290.3 L321.9 289.5 L322.9 291.6 L324.2 292.3 L326 290.9 L327.4 292 L329 292.8 L330.3 290.7 L331.9 291.4 L333.5 292.6 L334.8 290.7 L336.3 290.8 L337.9 292.3 L339.4 291.1 L340.8 290 L342.4 291.3 L343.9 291.8 L345.3 290.4 L346.8 289.7 L348.4 290.6 L349.9 291.3 L351.4 290.9 L352.8 289.9 L354.3 289.4 L355.8 289.6 L357.3 290.2 L358.8 290.8 L360.2 291 L361.8 290.9 L363.3 290.7 L364.8 290.5 L366.3 290.5 L367.8 290.8 L369.3 291.2 L370.7 291.7 L372.2 292.1 L373.7 292.2 L374.9 292.3 L375.1 293.7 L375.1 295.2 L374.9 296.7 L374.5 298.2 L374.3 299.7 L374.4 301.2 L374.6 302.7 L374.3 304.2 L373.9 305.7 L374 307.2 L374.2 308.7 L373.8 310.2 L373.5 311.7 L373.7 313.2 L373.5 314.7 L373 316.1 L373.3 317.7 L373.2 319.2 L372.6 320.6 L372.9 322.1 L372.9 323.7 L372.2 325.1 L372.3 326.6 L372.7 328.2 L372 329.6 L371.5 331.1 L372.2 332.6 L372.4 334.1 L371.5 335.6 L371.1 337.1 L371.7 338.6 L372.3 340.1 L372.1 341.6 L371.3 343.1 L370.7 344.6 L370.6 346.1 L371.1 347.6 L371.7 349.1 L372.1 350.6 L371.9 352.1 L371.4 353.5 L371.3 355 L371.7 356.6 L372.3 358 L373.4 359.1 L374.8 360 L376.3 360.8 L377.4 361.9 L377.9 363.3 L377.8 365.2 L377.9 366.9 L379.2 368.1 L381.1 367.7 L382.6 367.4 L383.8 368.9 L385.1 370.3 L386.7 369.6 L388.5 368.7 L389.7 370.3 L390.9 371.6 L392.8 370.2 L394.3 370.4 L395.3 372.5 L397.1 371.7 L398.9 371.6 L398.8 374 L400.4 374.6 L402.2 374.9 L402.2 377 L403.4 378 L405.4 378.1 L405.7 379.9 L406.3 381.4 L408.2 381.6 L409.4 382.5 L409.8 384.3 L410.9 385.3 L412.6 385.6 L414 386.3 L414.8 387.7 L415.5 389.1 L416.7 390 L418.2 390.6 L419.6 391.3 L420.8 392.2 L421.8 393.4 L422.7 394.6 L423.7 395.7 L424.9 396.7 L426.1 397.6 L427.4 398.4 L428.7 399.2 L429.9 400 L431 401 L432.1 402 L433.2 403.1 L434.2 404.2 L435.4 405.1 L436.7 405.9 L438 406.7 L439.2 407.6 L440.1 408.8 L441.2 409.9 L442.5 410.6 L443.8 411.5 L444.5 412.9 L445.3 414.2 L446.5 415.1 L447.6 416.1 L448.1 417.6 L449.2 418.7 L450.6 419.5 L451.1 421.1 L452 422.2 L453.6 422.9 L454 424.5 L454.8 425.8 L456.5 426.3 L457.1 427.8 L457.7 429.6 L459.5 428.7 L461 428.4 L462.5 429.6 L464 429.5 L465.5 428.4 L467 428.3 L468.5 429.4 L470 429.9 L471.5 429.2 L473 428.2 L474.5 428 L476 428.7 L477.5 429.6 L479.1 430.1 L480.6 429.5 L481.9 428.5 L483.2 427.4 L484.6 426.6 L486 426.2 L487.6 426.3 L489.2 426.7 L490.8 427.1 L492.4 427 L493.8 426.4 L495 425.1 L496.3 423.9 L497.7 423.4 L499.4 424 L500.4 425.3 L501.7 425.9 L503.6 425.4 L505.2 425.6 L506 427.4 L506.9 428.9 L508.9 428.4 L510.5 428.6 L511.1 430.6 L512.4 431.2 L514.4 430.7 L515.2 432.3 L516 433.7 L518.1 433.5 L518.9 434.9 L519.6 436.5 L521.5 436.4 L522.6 437.5 L523.2 439.2 L524.9 439.4 L526.3 440.1 L526.9 441.7 L528.1 442.6 L529.6 443.2 L530.6 444.4 L531.1 445.9 L532.2 447 L533.5 447.8 L534.7 448.7 L535.5 450 L536.3 451.3 L537.3 452.5 L538.4 453.5 L539.6 454.4 L540.7 455.4 L541.8 456.4 L542.9 457.5 L543.8 458.6 L544.8 459.8 L545.9 460.8 L547 461.8 L548.2 462.8 L549.4 463.7 L550.6 464.6 L551.7 465.6 L552.7 466.8 L553.6 468 L554.6 469.1 L555.8 470 L556.2 469.8" fill="none" stroke="#aad3df" stroke-width="1.6"/>
<path d="M654 342.1 L653.3 343.5 L653.6 345.8 L653 347.2 L650.6 347.2 L649 347.7 L649.4 350.1 L649.1 351.8 L646.5 351.5 L645.2 352.3 L645.9 355 L644.6 355.9 L642 355.6 L641.9 357.5 L642.2 359.7 L639.9 359.7 L638.1 360.3 L638.7 362.6 L638.4 364.2 L636.1 364.4 L634.6 365.1 L634.9 367.2 L634.8 369 L633.3 369.7 L631.3 370.2 L630.3 371.2 L630 372.9 L629.9 374.7 L629.2 376.1 L627.9 377 L626.5 377.8 L625.2 378.7 L624.1 379.9 L623.6 381.4 L623.4 382.9 L623.1 384.4 L622.8 385.9 L622.2 387.4 L621.5 388.7 L620.6 389.9 L619.7 391.1 L618.8 392.4 L618.1 393.7 L617.6 395.1 L617.3 396.6 L616.9 398.1 L616.3 399.5 L615.4 400.7 L614.5 401.9 L613.9 403.3 L613.6 404.9 L613.1 406.3 L612.2 407.5 L611 408 L609.7 408.7 L608.3 409.4 L606.7 409.4 L605.2 409.6 L603.9 410.5 L602.5 411 L600.9 410.8 L599.5 411.4 L598.3 412.4 L596.8 412.7 L595.3 413.1 L594.3 414.4 L593.3 415.6 L591.6 415.7 L590.1 416.1 L589.2 417.5 L588.2 418.8 L586.7 419.3 L585 419.4 L583.7 420.3 L583.2 422 L582.9 423.6 L582.1 424.9 L580.8 425.8 L579.2 426.4 L577.8 427.2 L576.7 428.2 L576 429.6 L575.5 431.1 L575.1 432.7 L574.6 434.3 L573.9 435.6 L572.8 436.6 L571.3 437.4 L569.7 438.1 L568.2 438.8 L567.2 439.9 L566.7 441.4 L566.7 443.3 L566.6 445.1 L566 445.8" fill="none" stroke="#aad3df" stroke-width="2"/>
<path d="M1204.1 640.5 L1205 641.7 L1206.9 642.4 L1208 643.6 L1207.3 645.5 L1207.3 647.2 L1209.4 647.9 L1210.7 648.9 L1209.8 651 L1210.2 652.5 L1212.5 653 L1212.9 654.5 L1212.1 656.6 L1213.6 657.5 L1215.4 658.3 L1214.9 660.2 L1214.6 661.9 L1216.5 662.8 L1217.6 664 L1216.8 665.9 L1216.8 667.5 L1218.4 668.5 L1219.7 669.6 L1219.7 671.2 L1219.3 673 L1219.7 674.4 L1220.8 675.6 L1222.1 676.7 L1222.8 678 L1223 679.6 L1223 681.2 L1223.2 682.7 L1223.6 684.2 L1224.3 685.5 L1224.8 686.1" fill="none" stroke="#aad3df" stroke-width="1.5"/>
<path d="M435 665C437.3 661.7 448.2 655.5 450 656C451.8 656.5 447.3 664.3 446 668C444.7 671.7 443.7 676.7 442 678C440.3 679.3 437.2 678.2 436 676C434.8 673.8 432.7 668.3 435 665Z" fill="#aad3df"/>
<path d="M490 590C491.3 587.5 498.8 582.2 500 583C501.2 583.8 498.3 592.5 497 595C495.7 597.5 493.2 598.8 492 598C490.8 597.2 488.7 592.5 490 590Z" fill="#aad3df" opacity=".8"/>
<path d="M1150 320C1159 314.5 1193.5 296 1204 287C1214.5 278 1211.5 269.5 1213 266" fill="none" stroke="#b9b6b1" stroke-width=".8"/>
<path d="M1238 266C1241 269.5 1251 278 1256 287C1261 296 1265.3 310.2 1268 320C1270.7 329.8 1272.3 336 1272 346C1271.7 356 1268.7 370 1266 380C1263.3 390 1262 397 1256 406C1250 415 1234.3 429.3 1230 434" fill="none" stroke="#b9b6b1" stroke-width=".8"/>
<path d="M1131 342C1134.2 345.8 1145.2 356.2 1150 365C1154.8 373.8 1155.3 385.8 1160 395C1164.7 404.2 1171.3 412.5 1178 420C1184.7 427.5 1191.3 437.2 1200 440C1208.7 442.8 1225 437.5 1230 437" fill="none" stroke="#b9b6b1" stroke-width=".8"/>
<path d="M1115 395C1119.7 391 1134.7 370.2 1143 371C1151.3 371.8 1158.8 391 1165 400C1171.2 409 1177.5 420.8 1180 425" fill="none" stroke="#b9b6b1" stroke-width=".8"/>
<path d="M1230 437C1238.3 436.2 1265 429.8 1280 432C1295 434.2 1309 444.2 1320 450C1331 455.8 1335.5 468.7 1346 467C1356.5 465.3 1376.8 444.5 1383 440" fill="none" stroke="#b9b6b1" stroke-width=".8"/>
<path d="M1230 437C1225.8 441.2 1211.7 455.5 1205 462C1198.3 468.5 1192.5 473.7 1190 476" fill="none" stroke="#b9b6b1" stroke-width=".8"/>
<path d="M1205 495C1208.3 494.2 1219.8 487.5 1225 490C1230.2 492.5 1234.2 501.7 1236 510C1237.8 518.3 1237.8 532.5 1236 540C1234.2 547.5 1226.8 552.5 1225 555" fill="none" stroke="#b9b6b1" stroke-width=".8"/>
<path d="M1225 555C1229.2 557.5 1243.3 564.2 1250 570C1256.7 575.8 1260.8 583.3 1265 590C1269.2 596.7 1273.3 606.7 1275 610" fill="none" stroke="#b9b6b1" stroke-width=".8"/>
<path d="M940 520C943.3 523.3 954.2 530 960 540C965.8 550 970 566.7 975 580C980 593.3 985.8 602.3 990 620C994.2 637.7 998.3 675 1000 686" fill="none" stroke="#b9b6b1" stroke-width=".8"/>
<path d="M1000 500C1001.7 506.7 1005 528.3 1010 540C1015 551.7 1023.3 560 1030 570C1036.7 580 1045 588.3 1050 600C1055 611.7 1058.3 633.3 1060 640" fill="none" stroke="#b9b6b1" stroke-width=".8"/>
<path d="M1023 600C1029.2 601.7 1047.2 603.3 1060 610C1072.8 616.7 1088.3 627.3 1100 640C1111.7 652.7 1125 678.3 1130 686" fill="none" stroke="#b9b6b1" stroke-width=".8"/>
<path d="M905 560C909.2 557.5 920.8 550 930 545C939.2 540 955 532.5 960 530" fill="none" stroke="#b9b6b1" stroke-width=".8"/>
<path d="M950 640C956.7 641.7 976.7 645 990 650C1003.3 655 1023.3 666.7 1030 670" fill="none" stroke="#b9b6b1" stroke-width=".8"/>
<path d="M1383 560C1379.2 553.3 1366.3 531.7 1360 520C1353.7 508.3 1349 497.3 1345 490C1341 482.7 1337.5 478.3 1336 476" fill="none" stroke="#b9b6b1" stroke-width=".8"/>
<path d="M1280 650 L1285 686" fill="none" stroke="#b9b6b1" stroke-width=".8"/>
<path d="M700 300C703.3 305 711.7 323.3 720 330C728.3 336.7 745 338.3 750 340" fill="none" stroke="#b9b6b1" stroke-width=".8"/>
<path d="M313 436C324.4 440.7 395.8 469.7 411 476C426.2 482.3 437.1 488.4 443 490C448.9 491.6 456.1 489.5 462 490C467.9 490.5 486.3 494.7 494 494C501.7 493.3 524 485.2 528 484" fill="none" stroke="#f5c98a" stroke-width="1.7" stroke-linejoin="round"/>
<path d="M619 419 L575 463" fill="none" stroke="#f5c98a" stroke-width="1.7" stroke-linejoin="round"/>
<path d="M531 526C532.8 526.5 539.9 527.7 546 530C552.1 532.3 574.5 539.6 583 546C591.5 552.4 611.5 576.8 619 585C626.5 593.2 643.7 612.4 647 616" fill="none" stroke="#f5c98a" stroke-width="1.7" stroke-linejoin="round"/>
<path d="M1118 266C1119 269 1125.5 285 1127 292C1128.5 299 1131.3 320.4 1131 326C1130.7 331.6 1129.4 337.3 1124 340C1118.6 342.7 1089.5 347.9 1085 349" fill="none" stroke="#f5c98a" stroke-width="1.7" stroke-linejoin="round"/>
<path d="M1124 340C1127 337.7 1143.7 319.5 1150 320C1156.3 320.5 1172.9 338.2 1178 344C1183.1 349.8 1191.8 363.4 1194 370C1196.2 376.6 1196.1 395.1 1197 401C1197.9 406.9 1198.4 416.8 1202 421C1205.6 425.2 1221.7 432.7 1228 437C1234.3 441.3 1249.7 454.6 1256 458C1262.3 461.4 1276.5 464.2 1282 466C1287.5 467.8 1297.9 472.4 1303 473C1308.1 473.6 1322.6 472.2 1326 471C1329.4 469.8 1331.3 463.9 1332 463" fill="none" stroke="#f5c98a" stroke-width="1.7" stroke-linejoin="round"/>
<path d="M1080 350C1082.5 354.4 1096.2 381.5 1101 388C1105.8 394.5 1117.7 400.6 1121 406C1124.3 411.4 1128.5 429.2 1129 434C1129.5 438.8 1124.4 442.1 1125 447C1125.6 451.9 1129 468.1 1134 476C1139 483.9 1161 506.2 1168 515C1175 523.8 1189.8 542.8 1194 551C1198.2 559.2 1201.9 578.6 1204 585C1206.1 591.4 1211 600.6 1212 606C1213 611.4 1212.9 628.1 1213 631" fill="none" stroke="#f5c98a" stroke-width="1.7" stroke-linejoin="round"/>
<path d="M901 266C901.4 268.1 902.1 277.9 904 284C905.9 290.1 914.9 311.4 917 318C919.1 324.6 922.4 336.2 922 341C921.6 345.8 916.8 355.6 914 359C911.2 362.4 899.2 365.7 898 370C896.8 374.3 905.2 390.1 904 396C902.8 401.9 891.4 415.1 888 421C884.6 426.9 877.1 440.6 875 447C872.9 453.4 871.5 467.5 870 476C868.5 484.5 864.3 509 862 520C859.7 531 851.4 564.2 850 570" fill="none" stroke="#f5c98a" stroke-width="1.7" stroke-linejoin="round"/>
<path d="M1033 350C1027.9 350.5 994.7 349.3 989 354C983.3 358.7 985.8 384.5 984 390C982.2 395.5 979.1 400.5 974 401C968.9 401.5 946.1 392.8 940 394C933.9 395.2 925 407.5 922 411C919 414.5 918 420.4 914 424C910 427.6 891 439.9 888 442" fill="none" stroke="#f5c98a" stroke-width="1.7" stroke-linejoin="round"/>
<path d="M1033 554C1028.8 554.8 1004.2 556.8 997 561C989.8 565.2 978.6 581.1 971 590C963.4 598.9 940.2 627.3 932 637C923.8 646.7 905.8 667.3 901 673C896.2 678.7 892.2 684.5 891 686" fill="none" stroke="#f5c98a" stroke-width="1.7" stroke-linejoin="round"/>
<path d="M948 486C952.2 486.9 974.1 491.2 984 494C993.9 496.8 1024.8 506 1033 510C1041.2 514 1047.6 522 1054 528C1060.4 534 1081.7 554.4 1088 561C1094.3 567.6 1101.7 579.8 1108 585C1114.3 590.2 1135.9 599.9 1142 606C1148.1 612.1 1156.6 630.4 1160 637C1163.4 643.6 1170.1 657.3 1171 663C1171.9 668.7 1168.3 683.3 1168 686" fill="none" stroke="#f5c98a" stroke-width="1.7" stroke-linejoin="round"/>
<path d="M1103 580C1101.5 581.5 1092.7 585.5 1090 593C1087.3 600.5 1082.3 633.1 1080 644C1077.7 654.9 1071.2 681.1 1070 686" fill="none" stroke="#f5c98a" stroke-width="1.7" stroke-linejoin="round"/>
<path d="M893 606C896 612.6 914.7 653.7 919 663C923.3 672.3 928.7 683.3 930 686" fill="none" stroke="#f5c98a" stroke-width="1.7" stroke-linejoin="round"/>
<path d="M1337 476C1335.5 479 1326.5 495.9 1324 502C1321.5 508.1 1316.2 523.2 1316 528C1315.8 532.8 1322.3 538.5 1322 543C1321.7 547.5 1315 560.4 1313 567C1311 573.6 1305.9 596.1 1305 600" fill="none" stroke="#f5c98a" stroke-width="1.7" stroke-linejoin="round"/>
<path d="M1383 663C1380.3 663.8 1364.5 667.3 1360 670C1355.5 672.7 1345.9 684.1 1344 686" fill="none" stroke="#f5c98a" stroke-width="1.7" stroke-linejoin="round"/>
<path d="M744 554C741.2 557 725.1 573.5 720 580C714.9 586.5 703.5 603 700 610C696.5 617 690 634.2 690 640C690 645.8 696.5 654.6 700 660C703.5 665.4 717.7 683 720 686" fill="none" stroke="#f5c98a" stroke-width="1.7" stroke-linejoin="round"/>
<path d="M735 600C736.8 603.5 747.1 623 750 630C752.9 637 759.1 653.5 760 660C760.9 666.5 758.2 683 758 686" fill="none" stroke="#f5c98a" stroke-width="1.7" stroke-linejoin="round"/>
<path d="M870 476C873.5 475.3 891.2 469.5 900 470C908.8 470.5 939.8 478.8 945 480" fill="none" stroke="#f5c98a" stroke-width="1.7" stroke-linejoin="round"/>
<path d="M850 570C848.8 574.7 842.9 601.8 840 610C837.1 618.2 829.7 634.2 825 640C820.3 645.8 802.9 657.7 800 660" fill="none" stroke="#f5c98a" stroke-width="1.7" stroke-linejoin="round"/>
<path d="M945 455C948.5 453.2 967.4 442.9 975 440C982.6 437.1 1005.9 431.2 1010 430" fill="none" stroke="#f5c98a" stroke-width="1.7" stroke-linejoin="round"/>
<path d="M628 478C631.7 478.5 651.6 482.2 660 482C668.4 481.8 690.7 477.4 700 476C709.3 474.6 731.2 471.6 740 470C748.8 468.4 767.4 464.1 775 462C782.6 459.9 801.5 453.2 805 452" fill="none" stroke="#f5c98a" stroke-width="1.7" stroke-linejoin="round"/>
<path d="M650 520C654.7 518.8 680.7 511.8 690 510C699.3 508.2 720.7 507.3 730 505C739.3 502.7 761.8 494.1 770 490C778.2 485.9 796.5 472.3 800 470" fill="none" stroke="#f5c98a" stroke-width="1.7" stroke-linejoin="round"/>
<path d="M680 440C681.2 444.7 687.7 470.7 690 480C692.3 489.3 698.2 510.7 700 520C701.8 529.3 705 550.7 705 560C705 569.3 700.6 595.3 700 600" fill="none" stroke="#f5c98a" stroke-width="1.7" stroke-linejoin="round"/>
<path d="M720 420C721.2 424.7 727.9 450.7 730 460C732.1 469.3 736.6 490.7 738 500C739.4 509.3 741.5 535.3 742 540" fill="none" stroke="#f5c98a" stroke-width="1.7" stroke-linejoin="round"/>
<path d="M640 550C644.7 549.4 671.2 545.2 680 545C688.8 544.8 707.6 547 715 548C722.4 549 739.7 553.3 743 554" fill="none" stroke="#f5c98a" stroke-width="1.7" stroke-linejoin="round"/>
<path d="M780 440C779.4 444.7 776.2 470.7 775 480C773.8 489.3 771.2 510.7 770 520C768.8 529.3 765.6 555.3 765 560" fill="none" stroke="#f5c98a" stroke-width="1.7" stroke-linejoin="round"/>
<path d="M830 440C833.5 441.2 853 449.4 860 450C867 450.6 883 447.3 890 445C897 442.7 913.6 432.9 920 430C926.4 427.1 942.1 421.2 945 420" fill="none" stroke="#f5c98a" stroke-width="1.7" stroke-linejoin="round"/>
<path d="M840 480C843.5 478.8 862.4 471.8 870 470C877.6 468.2 896.8 465 905 465C913.2 465 935.9 469.4 940 470" fill="none" stroke="#f5c98a" stroke-width="1.7" stroke-linejoin="round"/>
<path d="M820 400C823.5 401.2 843 410 850 410C857 410 874.4 404.7 880 400C885.6 395.3 895.9 373.5 898 370" fill="none" stroke="#f5c98a" stroke-width="1.7" stroke-linejoin="round"/>
<path d="M905 500C906.2 496.5 912.7 477 915 470C917.3 463 922.1 448.9 925 440C927.9 431.1 938.2 399.4 940 394" fill="none" stroke="#f5c98a" stroke-width="1.7" stroke-linejoin="round"/>
<path d="M808 541C810.6 543.2 825.1 556.6 830 560C834.9 563.4 847.7 568.8 850 570" fill="none" stroke="#f5c98a" stroke-width="1.7" stroke-linejoin="round"/>
<path d="M776 594C778.8 594.7 793.7 598.6 800 600C806.3 601.4 823 606 830 606C837 606 853.4 603.4 860 600C866.6 596.6 883.9 579.7 887 577" fill="none" stroke="#f5c98a" stroke-width="1.7" stroke-linejoin="round"/>
<path d="M665 600C667.9 598.8 683.6 592.3 690 590C696.4 587.7 716.5 581.2 720 580" fill="none" stroke="#f5c98a" stroke-width="1.7" stroke-linejoin="round"/>
<path d="M492 267C493.3 269 501.2 278.6 503 284C504.8 289.4 502 305.4 507 313C512 320.6 536.9 340.2 546 349C555.1 357.8 578 381.4 585 388C592 394.6 600.5 403.4 606 406C611.5 408.6 626.3 408.8 632 410C637.7 411.2 652.3 415.3 655 416" fill="none" stroke="#f09b83" stroke-width="2" stroke-linejoin="round"/>
<path d="M700 312C696.9 313.9 679.2 324.3 673 328C666.8 331.7 655.8 338.3 647 344C638.2 349.7 605.2 371.9 598 377C590.8 382.1 588.6 384.4 585 388C581.4 391.6 571 402.9 567 408C563 413.1 555.5 427.7 551 432C546.5 436.3 530.9 439.9 528 445C525.1 450.1 526 471.4 526 476C526 480.6 526.7 482.8 528 484C529.3 485.2 536.6 481.2 537 486C537.4 490.8 533 516.2 531 525C529 533.8 525.5 550 520 561C514.5 572 489.7 606.5 484 619C478.3 631.5 473.7 660.2 471 668C468.3 675.8 462.2 683.9 461 686" fill="none" stroke="#f09b83" stroke-width="2" stroke-linejoin="round"/>
<path d="M673 330C675.5 329.1 687 323.8 694 322C701 320.2 723.5 318.6 733 315C742.5 311.4 769.9 296.7 775 291C780.1 285.3 776.8 268.9 777 266" fill="none" stroke="#f09b83" stroke-width="2" stroke-linejoin="round"/>
<path d="M775 291C777.6 293.6 790.8 307.2 797 313C803.2 318.8 824.4 337.7 828 341" fill="none" stroke="#f09b83" stroke-width="2" stroke-linejoin="round"/>
<path d="M694 322C694.1 324.7 694.4 339.4 695 345C695.6 350.6 695.5 363.8 699 370C702.5 376.2 720.2 392.6 725 398C729.8 403.4 735.5 412.5 740 416C744.5 419.5 758.2 426.5 764 428C769.8 429.5 784.9 428.5 790 429C795.1 429.5 805.9 431.6 808 432" fill="none" stroke="#f09b83" stroke-width="2" stroke-linejoin="round"/>
<path d="M828 341C826.6 345.6 818.3 373 816 380C813.7 387 810.5 396.8 808 401C805.5 405.2 800.1 412.9 795 416C789.9 419.1 767.6 426.6 764 428" fill="none" stroke="#f09b83" stroke-width="2" stroke-linejoin="round"/>
<path d="M896 573C900.2 573.5 924.8 575 932 577C939.2 579 951.9 586 958 590C964.1 594 978.3 607 984 611C989.7 615 1001.3 622.4 1007 624C1012.7 625.6 1027.2 623.8 1033 625C1038.8 626.2 1050 630.5 1057 634C1064 637.5 1083.7 651.9 1093 655C1102.3 658.1 1128.2 659.8 1137 661C1145.8 662.2 1161.7 666.6 1168 665C1174.3 663.4 1185.9 650.6 1191 647C1196.1 643.4 1205.9 636.5 1212 634C1218.1 631.5 1236 628.1 1243 626C1250 623.9 1265.6 616.6 1272 616C1278.4 615.4 1293.8 618.9 1298 621C1302.2 623.1 1305.3 631.4 1308 634C1310.7 636.6 1317 642.1 1321 643C1325 643.9 1337.5 644 1342 642C1346.5 640 1356.4 629.6 1360 626C1363.6 622.4 1370.3 613 1373 611C1375.7 609 1381.8 609.2 1383 609" fill="none" stroke="#f09b83" stroke-width="2" stroke-linejoin="round"/>
<path d="M640 470C644.7 471.2 670.7 477.7 680 480C689.3 482.3 710.7 487.7 720 490C729.3 492.3 750.7 499.4 760 500C769.3 500.6 795.3 495.6 800 495" fill="none" stroke="#f09b83" stroke-width="2" stroke-linejoin="round"/>
<path d="M660 440C663.5 443.5 683 463 690 470C697 477 713.6 491.8 720 500C726.4 508.2 740.3 531.8 745 540C749.7 548.2 754.8 560.7 760 570C765.2 579.3 784.2 609.5 790 620C795.8 630.5 806.5 652.3 810 660C813.5 667.7 818.8 683 820 686" fill="none" stroke="#f09b83" stroke-width="2" stroke-linejoin="round"/>
<path d="M700 420C703.5 423.5 723 443 730 450C737 457 753 474.2 760 480C767 485.8 781.8 493 790 500C798.2 507 821.8 532.4 830 540C838.2 547.6 852.3 561.1 860 565C867.7 568.9 891.8 572.1 896 573" fill="none" stroke="#f09b83" stroke-width="2" stroke-linejoin="round"/>
<path d="M764 428C763.5 431.7 761 451.6 760 460C759 468.4 756.8 490.7 755 500C753.2 509.3 746.2 535.3 745 540" fill="none" stroke="#f09b83" stroke-width="2" stroke-linejoin="round"/>
<path d="M808 432C807.1 435.3 801.4 452.8 800 460C798.6 467.2 796.5 490 796 494" fill="none" stroke="#f09b83" stroke-width="2" stroke-linejoin="round"/>
<path d="M640 500C644.7 502.3 670.7 516.5 680 520C689.3 523.5 715.3 528.8 720 530" fill="none" stroke="#f09b83" stroke-width="2" stroke-linejoin="round"/>
<path d="M740 416C737.7 418.8 725.8 433.7 720 440C714.2 446.3 697 463 690 470C683 477 665.8 493 660 500C654.2 507 642.3 526.5 640 530" fill="none" stroke="#f09b83" stroke-width="2" stroke-linejoin="round"/>
<path d="M796 494C798.8 497 813.7 514 820 520C826.3 526 844.2 540.3 850 545C855.8 549.7 867.7 558.2 870 560" fill="none" stroke="#f09b83" stroke-width="2" stroke-linejoin="round"/>
<path d="M828 341C832.5 338.6 860 324.8 867 320C874 315.2 883.5 304.6 888 300C892.5 295.4 902.4 285 906 281C909.6 277 917.5 267.8 919 266" fill="none" stroke="#e66e89" stroke-width="2.6"/>
<path d="M699 370C702 373.3 720.2 392.6 725 398C729.8 403.4 735.5 412.5 740 416C744.5 419.5 758.2 426.5 764 428C769.8 429.5 784.9 428.5 790 429C795.1 429.5 803.3 431.2 808 432C812.7 432.8 827.4 435.5 830 436" fill="none" stroke="#e66e89" stroke-width="2.4" opacity=".8"/>
<path d="M459.6 266.9 L459.1 268.7 L461 269.6 L464.6 269.8 L467.5 270.4 L467.3 272 L464.4 274.7 L462.2 277.1 L463.9 278.1 L468.3 278.1 L470.8 278.7 L468.9 280.8 L466.7 284.5 L467.5 286.1 L471 284.6 L474.2 283.2 L474.9 284.7 L473.6 288.3 L473.1 291.1 L474.8 291.4 L478 290.2 L480.4 289.4 L481.3 290.1 L481.6 292.5 L481.9 295.2 L482.6 297 L484 297.5 L485.9 297.2 L488 296.6 L489.9 296.2 L491.5 296.3 L492.9 296.9 L494.3 298.1 L495.1 300.3 L494.2 302.1 L493.2 303.5 L492.5 304.9 L491.9 306.3 L491.5 307.8 L491.4 309.3 L491.5 310.8 L491.8 312.4 L492.2 313.9 L492.8 315.2 L493.7 316.2 L494.5 317.5 L494.9 319 L495.1 320.6 L495.4 322.2 L495.9 323.6 L496.9 324.7 L498.2 325.7 L499.4 326.8 L500.1 328.1 L500.2 329.8 L500.3 331.3 L500.5 332.6 L501.4 334 L502.1 335.5 L501.8 337 L500.8 338.6 L500.5 340.1 L501.5 341.5 L502.7 343 L502.8 344.5 L501.6 346 L500.6 347.6 L500.9 348.6 L501.2 350.3 L501.2 352.3 L500.3 353.5 L498.4 353.9 L496.3 354 L494.5 354.5 L493.6 355.6 L493.3 357.4 L493.4 359.4 L493.4 361.4 L493.1 363.1 L492.3 364.4 L491.5 364.2 L491 364.1 L491 365.8 L491.1 367.8 L491.2 369.6 L491.5 371.3 L492.2 372.8 L493.2 373.8 L494.8 374.5 L496.7 374.7 L499 374.7 L501.3 374.7 L503.3 375 L504.4 376 L504.4 378 L503.5 380.8 L502.4 383.5 L502.4 385.4 L504.4 385.8 L507.8 385 L510.8 384.6 L511.5 386 L509.9 389.1 L508.3 392.2 L509.5 393.2 L513.2 392.1 L516 391.1 L516.2 393 L515 396.9 L515.3 398.9 L518 397.9 L521.2 396.4 L522.4 397.2 L521.9 400.3 L520.5 401.8 L520.5 402.1 L522.4 404.2 L523.9 406.1 L523.6 407.5 L521.7 408.6 L519.7 409.7 L518.5 410.9 L518.4 412.4 L518.9 414.1 L519.6 415.8 L520.1 417.5 L520 419 L519.6 420.1 L518.7 419.8 L519.8 419.9 L521.4 419.9 L523 419.8 L524.5 419.6 L526 419.3 L527.4 418.8 L528.8 418.2 L530.1 417.5 L531.4 416.7 L532.9 415.9 L533.9 417 L534.5 418.4 L535 419.9 L535.2 421.4 L535.1 423 L535.1 424.6 L535.3 426.1 L536 427.4 L537.1 428.6 L538.2 429.9 L538.7 431.2 L538.5 432.9 L538.3 434.7 L539 436 L540.7 436.8 L542.5 437.6 L542.9 439.1 L542.1 441.2 L542 442.9 L543.6 443.8 L546 444.2 L547.2 445.4 L546.1 447.5 L544.1 449 L544 450.5 L546 452 L548.1 453.5 L548.4 455 L546.8 456.5 L544.6 458 L543.4 460.7 L545.9 462.7 L548.1 461.8 L550.1 460.3 L552 459.1 L553.6 458.6 L555.1 459.1 L556.4 460.4 L557.8 462.5 L556.7 464.7 L555.6 466.4 L554.7 468 L554.3 469.6 L554.5 471.1 L555.2 472.5 L556.6 473.8 L558.3 475.2 L560 474.9 L561 473.2 L562.5 472.3 L564 472.5 L566.3 474.1 L565.8 477 L563.5 478.6 L562.6 480.1 L563.8 481.6 L566.7 482.9 L569.3 484.3 L569.4 485.8 L566.9 487.4 L564.1 489.1 L563.9 490.6 L566.6 492 L569.3 493.3 L568.9 494.9 L566.1 496.5 L564.5 498.2 L566.2 499.8 L569.3 499.9 L570.6 500.8 L569.9 503 L569.1 505.3 L569.8 506.6 L571.9 507.1 L573.9 507.6 L574.9 508.8 L574.8 510.6 L574.6 512.5 L574.9 514 L575.8 515.1 L576.9 516.2 L578 517.4 L578.9 518.7 L579.5 520.1 L579.7 521.6 L579.8 523.1 L579.9 524.7 L580 526.2 L580.1 527.7 L580.4 529.2 L580.7 530.7 L581.1 532.1 L581.7 533.5 L582.3 534.9 L583 536.2 L583.8 537.6 L584.6 538.9 L585.2 540.3 L585.6 541.7 L585.7 543.1 L586 544.7 L586.3 546.3 L586.9 547.8 L588 548.8 L589.8 549.4 L591.6 549.9 L592.6 551 L592.6 552.9 L592.1 555.1 L592.6 556.6 L594.7 556.9 L597.3 556.9 L598.2 558.1 L597.2 560.6 L596.8 563.2 L598.6 563.6 L601.7 562.7 L603.6 562.8 L603.3 565.2 L602.3 568.4 L602.9 569.9 L605.6 569.3 L608.8 568.3 L610.3 568.8 L610 571.2 L609 574.4 L608.8 576.7 L610.1 577.5 L612.6 577.2 L615.3 576.3 L617.5 575.7 L619.1 576.1 L620 577.4 L620.5 579.3 L620.7 581.6 L621 583.8 L621.4 585.7 L622.2 587.3 L623.3 588.3 L624.7 588.9 L626.4 589.1 L628.4 588.9 L630.5 588.5 L632.7 588.3 L634.8 588.9 L636.2 590 L636.7 591.5 L636.4 593.5 L635.6 595.9 L635 598.2 L635.3 599.8 L637 600.5 L639.6 600.4 L642.1 600.5 L643.2 601.5 L642.7 603.8 L641.7 606.3 L642.1 607.9 L644.3 608.1 L646.9 608.2 L647.9 609.3 L646.9 611" fill="none" stroke="#8d618b" stroke-opacity=".3" stroke-width="5" stroke-linejoin="round"/>
<path d="M459.6 266.9 L459.1 268.7 L461 269.6 L464.6 269.8 L467.5 270.4 L467.3 272 L464.4 274.7 L462.2 277.1 L463.9 278.1 L468.3 278.1 L470.8 278.7 L468.9 280.8 L466.7 284.5 L467.5 286.1 L471 284.6 L474.2 283.2 L474.9 284.7 L473.6 288.3 L473.1 291.1 L474.8 291.4 L478 290.2 L480.4 289.4 L481.3 290.1 L481.6 292.5 L481.9 295.2 L482.6 297 L484 297.5 L485.9 297.2 L488 296.6 L489.9 296.2 L491.5 296.3 L492.9 296.9 L494.3 298.1 L495.1 300.3 L494.2 302.1 L493.2 303.5 L492.5 304.9 L491.9 306.3 L491.5 307.8 L491.4 309.3 L491.5 310.8 L491.8 312.4 L492.2 313.9 L492.8 315.2 L493.7 316.2 L494.5 317.5 L494.9 319 L495.1 320.6 L495.4 322.2 L495.9 323.6 L496.9 324.7 L498.2 325.7 L499.4 326.8 L500.1 328.1 L500.2 329.8 L500.3 331.3 L500.5 332.6 L501.4 334 L502.1 335.5 L501.8 337 L500.8 338.6 L500.5 340.1 L501.5 341.5 L502.7 343 L502.8 344.5 L501.6 346 L500.6 347.6 L500.9 348.6 L501.2 350.3 L501.2 352.3 L500.3 353.5 L498.4 353.9 L496.3 354 L494.5 354.5 L493.6 355.6 L493.3 357.4 L493.4 359.4 L493.4 361.4 L493.1 363.1 L492.3 364.4 L491.5 364.2 L491 364.1 L491 365.8 L491.1 367.8 L491.2 369.6 L491.5 371.3 L492.2 372.8 L493.2 373.8 L494.8 374.5 L496.7 374.7 L499 374.7 L501.3 374.7 L503.3 375 L504.4 376 L504.4 378 L503.5 380.8 L502.4 383.5 L502.4 385.4 L504.4 385.8 L507.8 385 L510.8 384.6 L511.5 386 L509.9 389.1 L508.3 392.2 L509.5 393.2 L513.2 392.1 L516 391.1 L516.2 393 L515 396.9 L515.3 398.9 L518 397.9 L521.2 396.4 L522.4 397.2 L521.9 400.3 L520.5 401.8 L520.5 402.1 L522.4 404.2 L523.9 406.1 L523.6 407.5 L521.7 408.6 L519.7 409.7 L518.5 410.9 L518.4 412.4 L518.9 414.1 L519.6 415.8 L520.1 417.5 L520 419 L519.6 420.1 L518.7 419.8 L519.8 419.9 L521.4 419.9 L523 419.8 L524.5 419.6 L526 419.3 L527.4 418.8 L528.8 418.2 L530.1 417.5 L531.4 416.7 L532.9 415.9 L533.9 417 L534.5 418.4 L535 419.9 L535.2 421.4 L535.1 423 L535.1 424.6 L535.3 426.1 L536 427.4 L537.1 428.6 L538.2 429.9 L538.7 431.2 L538.5 432.9 L538.3 434.7 L539 436 L540.7 436.8 L542.5 437.6 L542.9 439.1 L542.1 441.2 L542 442.9 L543.6 443.8 L546 444.2 L547.2 445.4 L546.1 447.5 L544.1 449 L544 450.5 L546 452 L548.1 453.5 L548.4 455 L546.8 456.5 L544.6 458 L543.4 460.7 L545.9 462.7 L548.1 461.8 L550.1 460.3 L552 459.1 L553.6 458.6 L555.1 459.1 L556.4 460.4 L557.8 462.5 L556.7 464.7 L555.6 466.4 L554.7 468 L554.3 469.6 L554.5 471.1 L555.2 472.5 L556.6 473.8 L558.3 475.2 L560 474.9 L561 473.2 L562.5 472.3 L564 472.5 L566.3 474.1 L565.8 477 L563.5 478.6 L562.6 480.1 L563.8 481.6 L566.7 482.9 L569.3 484.3 L569.4 485.8 L566.9 487.4 L564.1 489.1 L563.9 490.6 L566.6 492 L569.3 493.3 L568.9 494.9 L566.1 496.5 L564.5 498.2 L566.2 499.8 L569.3 499.9 L570.6 500.8 L569.9 503 L569.1 505.3 L569.8 506.6 L571.9 507.1 L573.9 507.6 L574.9 508.8 L574.8 510.6 L574.6 512.5 L574.9 514 L575.8 515.1 L576.9 516.2 L578 517.4 L578.9 518.7 L579.5 520.1 L579.7 521.6 L579.8 523.1 L579.9 524.7 L580 526.2 L580.1 527.7 L580.4 529.2 L580.7 530.7 L581.1 532.1 L581.7 533.5 L582.3 534.9 L583 536.2 L583.8 537.6 L584.6 538.9 L585.2 540.3 L585.6 541.7 L585.7 543.1 L586 544.7 L586.3 546.3 L586.9 547.8 L588 548.8 L589.8 549.4 L591.6 549.9 L592.6 551 L592.6 552.9 L592.1 555.1 L592.6 556.6 L594.7 556.9 L597.3 556.9 L598.2 558.1 L597.2 560.6 L596.8 563.2 L598.6 563.6 L601.7 562.7 L603.6 562.8 L603.3 565.2 L602.3 568.4 L602.9 569.9 L605.6 569.3 L608.8 568.3 L610.3 568.8 L610 571.2 L609 574.4 L608.8 576.7 L610.1 577.5 L612.6 577.2 L615.3 576.3 L617.5 575.7 L619.1 576.1 L620 577.4 L620.5 579.3 L620.7 581.6 L621 583.8 L621.4 585.7 L622.2 587.3 L623.3 588.3 L624.7 588.9 L626.4 589.1 L628.4 588.9 L630.5 588.5 L632.7 588.3 L634.8 588.9 L636.2 590 L636.7 591.5 L636.4 593.5 L635.6 595.9 L635 598.2 L635.3 599.8 L637 600.5 L639.6 600.4 L642.1 600.5 L643.2 601.5 L642.7 603.8 L641.7 606.3 L642.1 607.9 L644.3 608.1 L646.9 608.2 L647.9 609.3 L646.9 611" fill="none" stroke="#8d618b" stroke-opacity=".55" stroke-width="1.3" stroke-linejoin="round"/>
<path d="M823 262C821.3 265.3 816.8 274 813 282C809.2 290 805.2 301.8 800 310C794.8 318.2 788.5 322.3 782 331C775.5 339.7 766.3 354.2 761 362C755.7 369.8 756 370.7 750 378C744 385.3 733.5 398.7 725 406C716.5 413.3 707.7 417.5 699 422C690.3 426.5 682.3 429 673 433C663.7 437 651.7 441.5 643 446C634.3 450.5 626.5 454.7 621 460C615.5 465.3 612.2 471 610 478C607.8 485 607.8 492.3 608 502C608.2 511.7 608 526 611 536C614 546 620.7 553.8 626 562C631.3 570.2 639 576.8 643 585C647 593.2 647.5 603.8 650 611C652.5 618.2 654.2 624.2 658 628C661.8 631.8 666.2 631.2 673 634C679.8 636.8 690.3 640.2 699 645C707.7 649.8 717.8 655.5 725 663C732.2 670.5 739.2 685.5 742 690" fill="none" stroke="#8d618b" stroke-opacity=".28" stroke-width="5"/>
<path d="M823 262C821.3 265.3 816.8 274 813 282C809.2 290 805.2 301.8 800 310C794.8 318.2 788.5 322.3 782 331C775.5 339.7 766.3 354.2 761 362C755.7 369.8 756 370.7 750 378C744 385.3 733.5 398.7 725 406C716.5 413.3 707.7 417.5 699 422C690.3 426.5 682.3 429 673 433C663.7 437 651.7 441.5 643 446C634.3 450.5 626.5 454.7 621 460C615.5 465.3 612.2 471 610 478C607.8 485 607.8 492.3 608 502C608.2 511.7 608 526 611 536C614 546 620.7 553.8 626 562C631.3 570.2 639 576.8 643 585C647 593.2 647.5 603.8 650 611C652.5 618.2 654.2 624.2 658 628C661.8 631.8 666.2 631.2 673 634C679.8 636.8 690.3 640.2 699 645C707.7 649.8 717.8 655.5 725 663C732.2 670.5 739.2 685.5 742 690" fill="none" stroke="#8d618b" stroke-opacity=".5" stroke-width="1.2"/>
<path d="M1009.3 266.3 L1011.4 267.5 L1013.1 268.7 L1010.7 270.6 L1011 272.1 L1013.9 273.1 L1011.6 275 L1011.8 276.5 L1014.6 277.6 L1011.7 279.6 L1013.5 280.8 L1014.7 282.1 L1012.1 284 L1015.3 285.3 L1013.7 286.7 L1012.4 288.1 L1015 289.9 L1012.4 291.1 L1012.2 292.6 L1014.4 294.4 L1012 295.6 L1011.3 297 L1013.4 298.8 L1012.7 300 L1011.7 302 L1012.9 303.1 L1015 303.6 L1015.9 304.9 L1015.5 306.8 L1015.5 308.5 L1016.4 309.7 L1017.9 310.6 L1019.3 311.5 L1020.1 312.8 L1020.4 314.4 L1020.5 316 L1020.8 317.5 L1021.6 318.9 L1022.7 320 L1024.2 320.6 L1025.6 321.3 L1026.6 322.3 L1027.5 323.7 L1028.4 325 L1029.6 325.8 L1031.1 326.3 L1032.5 327.1 L1033.3 328.4 L1034.3 329.6 L1035.7 330.2 L1037.1 330.9 L1037.9 332.3 L1039 333.3 L1040.6 333.7 L1041.5 335 L1042.5 336.1 L1044.1 336.5 L1044.9 338 L1046.1 338.8 L1047.6 339.4 L1048.2 341 L1049.8 341.4 L1050.7 342.6 L1051.4 344.1 L1053.1 344.5 L1053.6 346.1 L1054.5 347.3 L1056.4 347.6 L1056.8 349.3 L1057.5 350.7 L1059.5 350.9 L1060.4 352.1 L1060.5 354.1 L1061.7 354.9 L1063.7 355.1 L1064.8 356.1 L1065 358 L1065.4 359.7 L1066.8 360.5 L1068.7 360.8 L1070.3 361.2 L1071.3 362.4 L1071.7 364.1 L1071.9 366 L1072.5 367.5 L1073.7 368.4 L1075.5 368.8 L1077.5 369 L1079 369.9 L1079.4 371.4 L1079 373.6 L1078.9 375.5 L1080.2 376.4 L1082.7 376.5 L1084.3 377.1 L1083.7 379.4 L1083.2 381.7 L1085.6 381.8 L1087.8 382 L1086.7 384.6 L1087.1 386.2 L1090.3 385.7 L1089.8 388 L1088.9 388.8" fill="none" stroke="#8d618b" stroke-opacity=".3" stroke-width="4.5" stroke-linejoin="round"/>
<path d="M1009.3 266.3 L1011.4 267.5 L1013.1 268.7 L1010.7 270.6 L1011 272.1 L1013.9 273.1 L1011.6 275 L1011.8 276.5 L1014.6 277.6 L1011.7 279.6 L1013.5 280.8 L1014.7 282.1 L1012.1 284 L1015.3 285.3 L1013.7 286.7 L1012.4 288.1 L1015 289.9 L1012.4 291.1 L1012.2 292.6 L1014.4 294.4 L1012 295.6 L1011.3 297 L1013.4 298.8 L1012.7 300 L1011.7 302 L1012.9 303.1 L1015 303.6 L1015.9 304.9 L1015.5 306.8 L1015.5 308.5 L1016.4 309.7 L1017.9 310.6 L1019.3 311.5 L1020.1 312.8 L1020.4 314.4 L1020.5 316 L1020.8 317.5 L1021.6 318.9 L1022.7 320 L1024.2 320.6 L1025.6 321.3 L1026.6 322.3 L1027.5 323.7 L1028.4 325 L1029.6 325.8 L1031.1 326.3 L1032.5 327.1 L1033.3 328.4 L1034.3 329.6 L1035.7 330.2 L1037.1 330.9 L1037.9 332.3 L1039 333.3 L1040.6 333.7 L1041.5 335 L1042.5 336.1 L1044.1 336.5 L1044.9 338 L1046.1 338.8 L1047.6 339.4 L1048.2 341 L1049.8 341.4 L1050.7 342.6 L1051.4 344.1 L1053.1 344.5 L1053.6 346.1 L1054.5 347.3 L1056.4 347.6 L1056.8 349.3 L1057.5 350.7 L1059.5 350.9 L1060.4 352.1 L1060.5 354.1 L1061.7 354.9 L1063.7 355.1 L1064.8 356.1 L1065 358 L1065.4 359.7 L1066.8 360.5 L1068.7 360.8 L1070.3 361.2 L1071.3 362.4 L1071.7 364.1 L1071.9 366 L1072.5 367.5 L1073.7 368.4 L1075.5 368.8 L1077.5 369 L1079 369.9 L1079.4 371.4 L1079 373.6 L1078.9 375.5 L1080.2 376.4 L1082.7 376.5 L1084.3 377.1 L1083.7 379.4 L1083.2 381.7 L1085.6 381.8 L1087.8 382 L1086.7 384.6 L1087.1 386.2 L1090.3 385.7 L1089.8 388 L1088.9 388.8" fill="none" stroke="#8d618b" stroke-opacity=".55" stroke-width="1.2" stroke-linejoin="round"/>
<path d="M1090 388C1091.6 388.5 1103.6 390.7 1106 393C1108.4 395.3 1113.5 407.6 1114 411C1114.5 414.4 1112.3 423.4 1111 427C1109.7 430.6 1102.3 442.1 1101 447C1099.7 451.9 1097.5 470.5 1098 476C1098.5 481.5 1103.1 496.3 1106 502C1108.9 507.7 1122.3 526.5 1127 533C1131.7 539.5 1148.9 561.6 1153 567C1157.1 572.4 1164.9 584.3 1168 587C1171.1 589.7 1179.8 592.9 1184 594C1188.2 595.1 1205.4 597.9 1210 598C1214.6 598.1 1225.4 594.2 1230 595C1234.6 595.8 1250.8 605.7 1256 606C1261.2 606.3 1279.3 599.6 1282 598C1284.7 596.4 1281.7 591.4 1283 590C1284.3 588.6 1292.2 581.9 1295 584C1297.8 586.1 1309.7 606.3 1311 611C1312.3 615.7 1307 626.4 1308 631C1309 635.6 1318.7 652.3 1321 657C1323.3 661.7 1329.2 675.1 1331 678C1332.8 680.9 1338.2 685.2 1339 686" fill="none" stroke="#8d618b" stroke-opacity=".3" stroke-width="4.5" stroke-linejoin="round"/>
<path d="M1090 388C1091.6 388.5 1103.6 390.7 1106 393C1108.4 395.3 1113.5 407.6 1114 411C1114.5 414.4 1112.3 423.4 1111 427C1109.7 430.6 1102.3 442.1 1101 447C1099.7 451.9 1097.5 470.5 1098 476C1098.5 481.5 1103.1 496.3 1106 502C1108.9 507.7 1122.3 526.5 1127 533C1131.7 539.5 1148.9 561.6 1153 567C1157.1 572.4 1164.9 584.3 1168 587C1171.1 589.7 1179.8 592.9 1184 594C1188.2 595.1 1205.4 597.9 1210 598C1214.6 598.1 1225.4 594.2 1230 595C1234.6 595.8 1250.8 605.7 1256 606C1261.2 606.3 1279.3 599.6 1282 598C1284.7 596.4 1281.7 591.4 1283 590C1284.3 588.6 1292.2 581.9 1295 584C1297.8 586.1 1309.7 606.3 1311 611C1312.3 615.7 1307 626.4 1308 631C1309 635.6 1318.7 652.3 1321 657C1323.3 661.7 1329.2 675.1 1331 678C1332.8 680.9 1338.2 685.2 1339 686" fill="none" stroke="#8d618b" stroke-opacity=".55" stroke-width="1.2" stroke-linejoin="round"/>
<path d="M1272 686 L1278 665 L1308 668 L1330 676" fill="none" stroke="#8d618b" stroke-opacity=".3" stroke-width="4"/>
<path d="M1272 686 L1278 665 L1308 668 L1330 676" fill="none" stroke="#8d618b" stroke-opacity=".55" stroke-width="1.2"/>
<path d="M1113 515C1110.2 517 1090.3 530.5 1085 535C1079.7 539.5 1063.3 554.5 1060 560C1056.7 565.5 1054.5 586 1052 590C1049.5 594 1037.9 599.4 1035 600C1032.1 600.6 1024.2 596.4 1023 596" fill="none" stroke="#8d618b" stroke-opacity=".6" stroke-width="1" stroke-dasharray="6 2 1.5 2"/>
<path d="M1147 560C1144.8 563 1128.5 584.5 1125 590C1121.5 595.5 1112.7 610 1112 615C1111.3 620 1115.7 636 1118 640C1120.3 644 1132.8 650.4 1135 655C1137.2 659.6 1139.5 682.9 1140 686" fill="none" stroke="#8d618b" stroke-opacity=".6" stroke-width="1" stroke-dasharray="6 2 1.5 2"/>
<path d="M1035 600C1036 604 1044.5 631.4 1045 640C1045.5 648.6 1040.5 681.4 1040 686" fill="none" stroke="#8d618b" stroke-opacity=".6" stroke-width="1" stroke-dasharray="6 2 1.5 2"/>
<path d="M1207 478.5l3.2 6h-6.4z" fill="#c9783a"/>
<path d="M1202 491.5l3.2 6h-6.4z" fill="#c9783a"/>
<path d="M1205 519.5l3.2 6h-6.4z" fill="#c9783a"/>
<path d="M1177 537.5l3.2 6h-6.4z" fill="#c9783a"/>
<path d="M1029 530.5l3.2 6h-6.4z" fill="#c9783a"/>
<path d="M1046 545.5l3.2 6h-6.4z" fill="#c9783a"/>
<path d="M1077 578.5l3.2 6h-6.4z" fill="#c9783a"/>
<path d="M1080 592.5l3.2 6h-6.4z" fill="#c9783a"/>
<path d="M1098 638.5l3.2 6h-6.4z" fill="#c9783a"/>
<path d="M1139 638.5l3.2 6h-6.4z" fill="#c9783a"/>
<path d="M1146 668.5l3.2 6h-6.4z" fill="#c9783a"/>
<path d="M1190 637.5l3.2 6h-6.4z" fill="#c9783a"/>
<path d="M1217 607.5l3.2 6h-6.4z" fill="#c9783a"/>
<path d="M1216 620.5l3.2 6h-6.4z" fill="#c9783a"/>
<path d="M1238 637.5l3.2 6h-6.4z" fill="#c9783a"/>
<path d="M1294 625.5l3.2 6h-6.4z" fill="#c9783a"/>
<path d="M1310 629.5l3.2 6h-6.4z" fill="#c9783a"/>
<path d="M1335 573.5l3.2 6h-6.4z" fill="#c9783a"/>
<path d="M1346 569.5l3.2 6h-6.4z" fill="#c9783a"/>
<path d="M1358 569.5l3.2 6h-6.4z" fill="#c9783a"/>
<path d="M1350 576.5l3.2 6h-6.4z" fill="#c9783a"/>
<path d="M1350 585.5l3.2 6h-6.4z" fill="#c9783a"/>
<path d="M1358 599.5l3.2 6h-6.4z" fill="#c9783a"/>
<path d="M1367 605.5l3.2 6h-6.4z" fill="#c9783a"/>
<path d="M977 374.5l3.2 6h-6.4z" fill="#c9783a"/>
<path d="M1008 436.5l3.2 6h-6.4z" fill="#c9783a"/>
<path d="M1046 462.5l3.2 6h-6.4z" fill="#c9783a"/>
<path d="M770 407.5l3.2 6h-6.4z" fill="#c9783a"/>
<path d="M803 417.5l3.2 6h-6.4z" fill="#c9783a"/>
<path d="M687 511.5l3.2 6h-6.4z" fill="#c9783a"/>
<path d="M735 518.5l3.2 6h-6.4z" fill="#c9783a"/>
<path d="M758 515.5l3.2 6h-6.4z" fill="#c9783a"/>
<path d="M700 531.5l3.2 6h-6.4z" fill="#c9783a"/>
<path d="M789 498.5l3.2 6h-6.4z" fill="#c9783a"/>
<path d="M1044 544.5l3.2 6h-6.4z" fill="#c9783a"/>
<path d="M817 661.5l3.2 6h-6.4z" fill="#c9783a"/>
<path d="M772 568.5l3.2 6h-6.4z" fill="#c9783a"/>
<path d="M815 514.5l3.2 6h-6.4z" fill="#c9783a"/>
<path d="M612 458 L621 458 L638 440 L673 407.5 L699 400.5 L717 393 L732.5 377.5 L748.5 360.5 L777 375 L808 386 L814.5 382.5 L824.5 390.5 L828.5 398 L817 419 L805 440 L808 455 L806.5 471 L807.5 475 L796 494 L787 512 L743 554 L732.5 543.5 L728.5 537 L723.5 531.5 L717 529 L712 524 L706.5 515 L700.5 507 L696.5 510 L693.5 528 L673 552 L669 572 L664 589 L660 580.5 L645 565.5 L627.5 550.5 L617 533 L614.5 503 L619 472.5Z" fill="#d32f2a" fill-opacity=".2" stroke="#d32f2a" stroke-width="2" stroke-linejoin="round"/>
<path d="M805 476 L817 481.5 L828.5 496.5 L843 519 L827 526.5 L830 530.5 L828.5 538 L808 541 L797.5 556.5 L793.5 577 L779.5 576 L762.5 568 L743 554 L787 512Z" fill="#f59e0b" fill-opacity=".2" stroke="#f59e0b" stroke-width="2" stroke-linejoin="round"/>
<path d="M700.5 507 L706.5 515 L712 524 L717 529 L723.5 531.5 L728.5 537 L732.5 543.5 L743 554 L699 639 L688.5 634 L673 627.5 L668.5 628 L662 611 L664 593.5 L669 572 L673 552 L693.5 528 L696.5 510Z" fill="#1e40af" fill-opacity=".2" stroke="#1e40af" stroke-width="2" stroke-linejoin="round"/>
<path d="M807.5 475 L806.5 471 L808 455 L805 440 L817 419 L828.5 398 L839 375 L846.5 356.5 L866 336 L875 346.5 L893.5 346.5 L901 362 L919 359.5 L948 344 L955.5 325.5 L962 315 L973.5 312 L984 320.5 L992 321.5 L1002 312.5 L1011.5 301 L1020.5 303.5 L1021.5 312.5 L1030.5 315 L1036.5 330 L1052 334 L1085 371 L1031 413.5 L1011 413.5 L976 425 L961 451 L944.5 456 L945 476 L947 487.5 L943 499 L928.5 512.5 L907.5 525 L898.5 526.5 L872.5 504.5 L859.5 500.5 L852 483.5 L817 481.5 L805 476Z" fill="#10b981" fill-opacity=".2" stroke="#10b981" stroke-width="2" stroke-linejoin="round"/>
<path d="M817 481.5 L852 483.5 L859.5 500.5 L872.5 504.5 L898.5 526.5 L907.5 525 L928.5 512.5 L898.5 544.5 L887 577 L892 598 L893.5 652.5 L888 651 L865 646 L858.5 648.5 L836.5 635.5 L819.5 625 L830 605.5 L806.5 591.5 L795 592.5 L784.5 596 L776.5 594 L762.5 568 L779.5 576 L793.5 577 L797.5 556.5 L808 541 L828.5 538 L830 530.5 L827 526.5 L843 519 L828.5 496.5Z" fill="#8b5cf6" fill-opacity=".2" stroke="#8b5cf6" stroke-width="2" stroke-linejoin="round"/>
<path d="M612 458 L621 458 L638 440 L673 407.5 L699 400.5 L717 393 L732.5 377.5 L748.5 360.5 L777 375 L808 386 L814.5 382.5 L824.5 390.5 L828.5 398 L817 419 L805 440 L808 455 L806.5 471 L807.5 475 L796 494 L787 512 L743 554 L732.5 543.5 L728.5 537 L723.5 531.5 L717 529 L712 524 L706.5 515 L700.5 507 L696.5 510 L693.5 528 L673 552 L669 572 L664 589 L660 580.5 L645 565.5 L627.5 550.5 L617 533 L614.5 503 L619 472.5Z" fill="url(#grid)" opacity=".5"/>
<path d="M743 554L787 512L805 476" fill="none" stroke="#f59e0b" stroke-width="2.6" stroke-linecap="round"/>
<rect x="680.5" y="345.5" width="32" height="16.5" rx="2.5" fill="#fbd5c6" stroke="#e8a48c" stroke-width="1"/>
<text x="696.5" y="357.7" font-size="10.5" text-anchor="middle" fill="#5d2f24">D075</text>
<rect x="542" y="409" width="32" height="16.5" rx="2.5" fill="#fbd5c6" stroke="#e8a48c" stroke-width="1"/>
<text x="558" y="421.2" font-size="10.5" text-anchor="middle" fill="#5d2f24">PY09</text>
<rect x="1053" y="332.5" width="32" height="16.5" rx="2.5" fill="#fbe6c9" stroke="#d9b88f" stroke-width="1"/>
<text x="1069" y="344.7" font-size="10.5" text-anchor="middle" fill="#4d3a1e">D012</text>
<rect x="1180" y="377" width="32" height="16.5" rx="2.5" fill="#fbe6c9" stroke="#d9b88f" stroke-width="1"/>
<text x="1196" y="389.2" font-size="10.5" text-anchor="middle" fill="#4d3a1e">D037</text>
<rect x="461.5" y="487" width="33" height="16.5" rx="2.5" fill="#fbe6c9" stroke="#d9b88f" stroke-width="1"/>
<text x="478" y="499.2" font-size="10.5" text-anchor="middle" fill="#4d3a1e">RN86</text>
<rect x="546.5" y="529" width="45.5" height="16.5" rx="2.5" fill="#fbe6c9" stroke="#d9b88f" stroke-width="1"/>
<text x="569.2" y="541.2" font-size="10.5" text-anchor="middle" fill="#4d3a1e">RNA011</text>
<rect x="906" y="660.5" width="32.5" height="16.5" rx="2.5" fill="#fbe6c9" stroke="#d9b88f" stroke-width="1"/>
<text x="922.2" y="672.7" font-size="10.5" text-anchor="middle" fill="#4d3a1e">D027</text>
<rect x="437.5" y="682.5" width="33" height="8" rx="2.5" fill="#fbd5c6" stroke="#e8a48c"/>
<text x="671" y="472.5" font-size="16.5" text-anchor="middle" fill="#333" stroke="#fff" stroke-opacity=".75" stroke-width="2" paint-order="stroke" stroke-linejoin="round">Asunción</text>
<text x="877" y="451" font-size="16.5" text-anchor="middle" fill="#333" stroke="#fff" stroke-opacity=".75" stroke-width="2" paint-order="stroke" stroke-linejoin="round">Luque</text>
<text x="853" y="574" font-size="16.5" text-anchor="middle" fill="#333" stroke="#fff" stroke-opacity=".75" stroke-width="2" paint-order="stroke" stroke-linejoin="round">San Lorenzo</text>
<text x="950" y="593.5" font-size="16" text-anchor="middle" fill="#333" stroke="#fff" stroke-opacity=".75" stroke-width="2" paint-order="stroke" stroke-linejoin="round">Capiatá</text>
<text x="816" y="354" font-size="15.5" text-anchor="middle" fill="#333" stroke="#fff" stroke-opacity=".75" stroke-width="2" paint-order="stroke" stroke-linejoin="round">Mariano Roque</text>
<text x="818" y="371.5" font-size="15.5" text-anchor="middle" fill="#333" stroke="#fff" stroke-opacity=".75" stroke-width="2" paint-order="stroke" stroke-linejoin="round">Alonso</text>
<text x="898" y="300" font-size="15.5" text-anchor="middle" fill="#333" stroke="#fff" stroke-opacity=".75" stroke-width="2" paint-order="stroke" stroke-linejoin="round">Limpio</text>
<text x="683" y="578" font-size="14.5" text-anchor="middle" fill="#333" stroke="#fff" stroke-opacity=".75" stroke-width="2" paint-order="stroke" stroke-linejoin="round">Lambaré</text>
<text x="735" y="619" font-size="14.5" text-anchor="middle" fill="#333" stroke="#fff" stroke-opacity=".75" stroke-width="2" paint-order="stroke" stroke-linejoin="round">Villa Elisa</text>
<text x="798" y="654" font-size="15" text-anchor="middle" fill="#333" stroke="#fff" stroke-opacity=".75" stroke-width="2" paint-order="stroke" stroke-linejoin="round">Ñemby</text>
<text x="785" y="279" font-size="11.5" text-anchor="middle" fill="#333" stroke="#fff" stroke-opacity=".75" stroke-width="2" paint-order="stroke" stroke-linejoin="round">Remansito</text>
<text x="556" y="369" font-size="11.5" text-anchor="middle" fill="#333" stroke="#fff" stroke-opacity=".75" stroke-width="2" paint-order="stroke" stroke-linejoin="round">José Falcón</text>
<text x="660" y="426" font-size="11.5" text-anchor="middle" fill="#333" stroke="#fff" stroke-opacity=".75" stroke-width="2" paint-order="stroke" stroke-linejoin="round">Nueva Asunción</text>
<text x="557" y="487" font-size="11.5" text-anchor="middle" fill="#333" stroke="#fff" stroke-opacity=".75" stroke-width="2" paint-order="stroke" stroke-linejoin="round">Clorinda</text>
<text x="1231" y="441" font-size="11.5" text-anchor="middle" fill="#333" stroke="#fff" stroke-opacity=".75" stroke-width="2" paint-order="stroke" stroke-linejoin="round">Altos</text>
<text x="1346" y="471" font-size="11.5" text-anchor="middle" fill="#333" stroke="#fff" stroke-opacity=".75" stroke-width="2" paint-order="stroke" stroke-linejoin="round">Atyrá</text>
<text x="1034" y="524" font-size="11.5" text-anchor="middle" fill="#333" stroke="#fff" stroke-opacity=".75" stroke-width="2" paint-order="stroke" stroke-linejoin="round">Areguá</text>
<text x="1164" y="517.5" font-size="11.5" text-anchor="middle" fill="#333" stroke="#fff" stroke-opacity=".75" stroke-width="2" paint-order="stroke" stroke-linejoin="round">San Bernardino</text>
<text x="1080" y="656" font-size="11.5" text-anchor="middle" fill="#333" stroke="#fff" stroke-opacity=".75" stroke-width="2" paint-order="stroke" stroke-linejoin="round">Itauguá</text>
<text x="1178" y="672" font-size="11.5" text-anchor="middle" fill="#333" stroke="#fff" stroke-opacity=".75" stroke-width="2" paint-order="stroke" stroke-linejoin="round">Ypacaraí</text>
<text x="1273" y="624" font-size="11.5" text-anchor="middle" fill="#333" stroke="#fff" stroke-opacity=".75" stroke-width="2" paint-order="stroke" stroke-linejoin="round">Jhugua Jhu</text>
<text x="756" y="683" font-size="11.5" text-anchor="middle" fill="#333" stroke="#fff" stroke-opacity=".75" stroke-width="2" paint-order="stroke" stroke-linejoin="round">San Antonio</text>
<text x="1368" y="642" font-size="11.5" text-anchor="start" fill="#333" stroke="#fff" stroke-opacity=".75" stroke-width="2" paint-order="stroke" stroke-linejoin="round">Ca</text>
<text x="706" y="504.5" font-size="13" text-anchor="middle" fill="#9a5b85" font-style="italic">Distrito Capital</text>
<text x="841" y="582" font-size="10.5" text-anchor="middle" fill="#7a6a8a" font-style="italic">San Lorenzo</text>
<text x="1209" y="641.5" font-size="10.5" text-anchor="middle" fill="#8b1c1c" font-style="italic" stroke="#fff" stroke-opacity=".75" stroke-width="2" paint-order="stroke" stroke-linejoin="round">Km. 42</text>
<text x="1190" y="655" font-size="10.5" text-anchor="middle" fill="#8b1c1c" font-style="italic" stroke="#fff" stroke-opacity=".75" stroke-width="2" paint-order="stroke" stroke-linejoin="round">Km. 40</text>
<text x="1309" y="644.5" font-size="10.5" text-anchor="middle" fill="#8b1c1c" font-style="italic" stroke="#fff" stroke-opacity=".75" stroke-width="2" paint-order="stroke" stroke-linejoin="round">Km. 50</text>
<text x="1185" y="610" font-size="11" text-anchor="middle" fill="#8d618b" font-style="italic" transform="rotate(20 1185 610)" stroke="#fff" stroke-opacity=".75" stroke-width="2" paint-order="stroke" stroke-linejoin="round">Central</text>
<text x="818" y="300" font-size="10.5" text-anchor="middle" fill="#a05a80" font-style="italic" transform="rotate(-62 818 300)" stroke="#fff" stroke-opacity=".75" stroke-width="2" paint-order="stroke" stroke-linejoin="round">Central</text>
<text x="1121" y="437" font-size="11" text-anchor="middle" fill="#8d618b" font-style="italic" transform="rotate(-72 1121 437)" stroke="#fff" stroke-opacity=".75" stroke-width="2" paint-order="stroke" stroke-linejoin="round">Cordillera</text>
<text x="845" y="413" font-size="10.5" text-anchor="middle" fill="#6b6fb5" font-style="italic">Aeropuerto</text>
<text x="845" y="425" font-size="10.5" text-anchor="middle" fill="#6b6fb5" font-style="italic">Internacional</text>
<text x="845" y="437" font-size="10.5" text-anchor="middle" fill="#6b6fb5" font-style="italic">Silvio Pettirossi</text>
<path d="M845 388l1.2 3.5 4.3 2.8v1.2l-4.3-1.3v3l1.4 1.1v.9l-2.6-.7-2.6.7v-.9l1.4-1.100v-3l-4.3 1.300v-1.200l4.3-2.800z" fill="#8461c4"/>
</svg>
<div style="position:absolute;left:10px;top:10px;width:34px;height:65px;border:2px solid rgba(0,0,0,.25);border-radius:5px;background:#fff;background-clip:padding-box;font-family:'DejaVu Sans Mono','Liberation Mono',monospace;font-weight:bold;font-size:18px;color:#000;text-align:center"><div style="position:absolute;left:0;top:0;width:30px;height:30px;line-height:30px;border-bottom:1px solid #ccc">+</div><div style="position:absolute;left:0;top:31px;width:30px;height:30px;line-height:30px">&#8722;</div></div>
  </div>
</div>

<div class="card zc" style="left:288px;width:362.67px"><div class="dot" style="background:#dc2626"></div><div class="nm" style="letter-spacing:-.4px">Asunción</div><div class="sl">asuncion</div><div class="p0">P0</div><div class="ac">Active</div><div class="ln"></div></div>
<div class="card zc" style="left:666.67px;width:362.67px"><div class="dot" style="background:#f59e0b"></div><div class="nm">Fernando de la Mora</div><div class="sl">fernando-de-la-mora</div><div class="p0">P0</div><div class="ac">Active</div><div class="ln"></div></div>
<div class="card zc" style="left:1045.33px;width:362.67px"><div class="dot" style="background:#1e40af"></div><div class="nm">Lambaré</div><div class="sl">lambare</div><div class="p0">P0</div><div class="ac">Active</div><div class="ln"></div></div>
</body>
</html>
